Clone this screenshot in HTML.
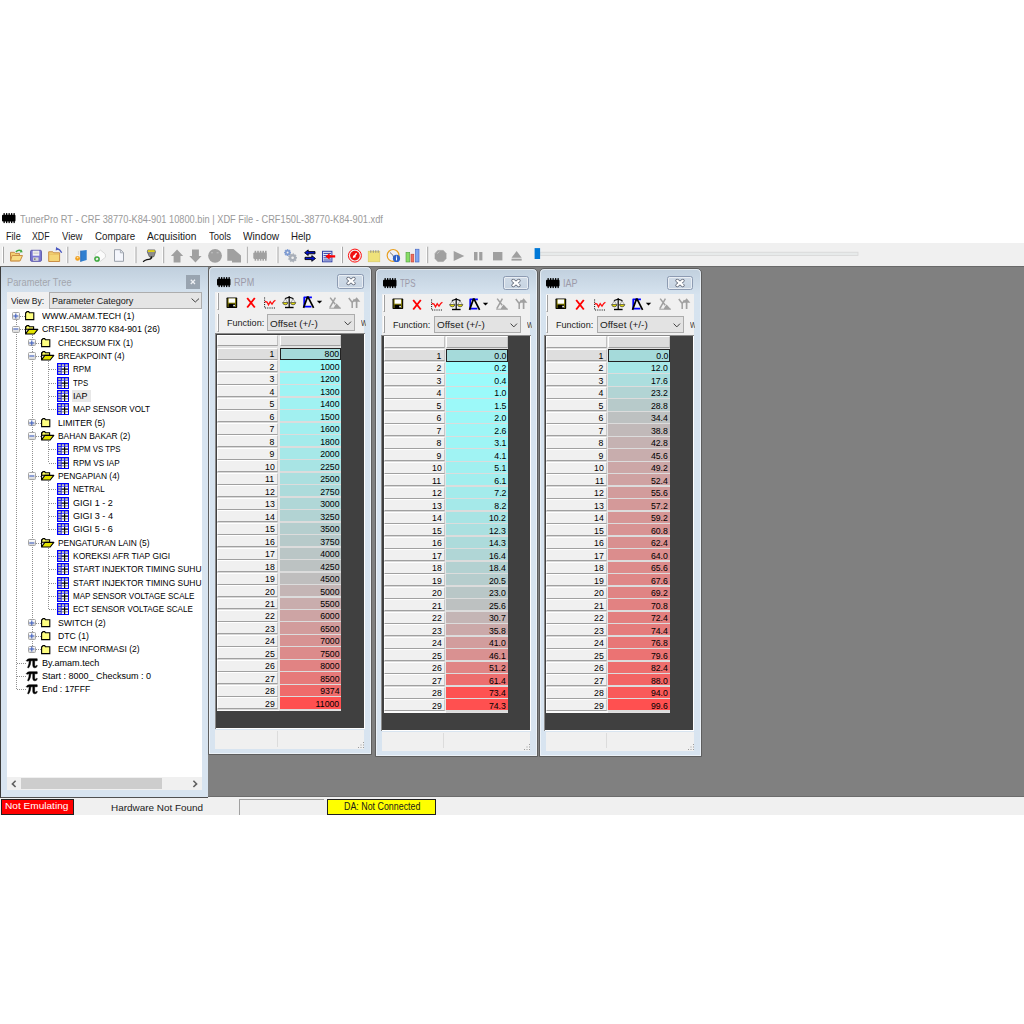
<!DOCTYPE html>
<html><head><meta charset="utf-8"><style>
html,body{margin:0;padding:0;}
body{width:1024px;height:1024px;position:relative;overflow:hidden;background:#fff;font-family:"Liberation Sans", sans-serif;}
div{box-sizing:border-box;}
svg{position:absolute;overflow:visible;}
</style></head><body>
<div style="position:absolute;left:0px;top:243px;width:1024px;height:23px;background:#f0f0f0;"></div>
<div style="position:absolute;left:0px;top:266px;width:1024px;height:531px;background:#808080;border-top:1px solid #696969;"></div>
<div style="position:absolute;left:208px;top:795.6px;width:816px;height:1px;background:#6c6c6c;"></div>
<div style="position:absolute;left:0px;top:796.6px;width:1024px;height:18.4px;background:#f0f0f0;"></div>
<div style="position:absolute;left:0px;top:267px;width:208px;height:530.5px;background:linear-gradient(#c0cfdd 0px,#d3e0ec 24px,#d8e4f0 40px,#d8e4f0 100%);border-left:1px solid #3a3a3a;border-bottom:1.2px solid #505050;"></div>
<div style="position:absolute;left:7px;top:291.5px;width:195px;height:17px;background:#f0f0f0;"></div>
<div style="position:absolute;left:49px;top:292px;width:152.5px;height:16.5px;background:#e5e5e5;border:1px solid #adadad;"></div>
<div style="position:absolute;left:7px;top:308.5px;width:195px;height:468.5px;background:#fff;"></div>
<div style="position:absolute;left:7px;top:777px;width:195px;height:12.5px;background:#f0f0f0;"></div>
<div style="position:absolute;left:21px;top:777.5px;width:141px;height:11.5px;background:#cdcdcd;"></div>
<div style="position:absolute;left:6.80px;top:277.13px;font-size:10.6px;line-height:10.6px;white-space:pre;color:#a3a6ad;font-weight:normal;transform-origin:0 0;transform:scaleX(0.8776);">Parameter Tree</div>
<div style="position:absolute;left:186px;top:275px;width:13.5px;height:13.5px;background:#99a4b0;"></div>
<div style="position:absolute;left:10.90px;top:295.64px;font-size:9.4px;line-height:9.4px;white-space:pre;color:#1a1a1a;font-weight:normal;transform-origin:0 0;transform:scaleX(0.9115);">View By:</div>
<div style="position:absolute;left:52.00px;top:295.67px;font-size:9.6px;line-height:9.6px;white-space:pre;color:#1a1a1a;font-weight:normal;transform-origin:0 0;transform:scaleX(0.9411);">Parameter Category</div>
<div style="position:absolute;left:208px;top:266.4px;width:164px;height:489.1px;background:linear-gradient(#c1d0de 0px,#ccdae7 14px,#d6e3ef 26px,#d8e4f0 100%);border:1px solid #5e5e5e;border-radius:5px 5px 0 0;"></div>
<div style="position:absolute;left:209px;top:267.4px;width:162px;height:487.1px;border:1px solid rgba(255,255,255,0.5);border-radius:4px 4px 0 0;"></div>
<svg style="left:216.6px;top:276.59999999999997px;" width="14" height="10.2" viewBox="0 0 14 10.2"><rect x="0" y="1.8" width="13.5" height="6.6" rx="1" fill="#000"/><rect x="1.50" y="0.1" width="1.3" height="2.2" fill="#000"/><rect x="1.50" y="7.9" width="1.3" height="2.2" fill="#000"/><rect x="4.00" y="0.1" width="1.3" height="2.2" fill="#000"/><rect x="4.00" y="7.9" width="1.3" height="2.2" fill="#000"/><rect x="6.50" y="0.1" width="1.3" height="2.2" fill="#000"/><rect x="6.50" y="7.9" width="1.3" height="2.2" fill="#000"/><rect x="9.00" y="0.1" width="1.3" height="2.2" fill="#000"/><rect x="9.00" y="7.9" width="1.3" height="2.2" fill="#000"/><rect x="11.50" y="0.1" width="1.3" height="2.2" fill="#000"/><rect x="11.50" y="7.9" width="1.3" height="2.2" fill="#000"/></svg>
<div style="position:absolute;left:233.50px;top:276.93px;font-size:10.6px;line-height:10.6px;white-space:pre;color:#9c9aa8;font-weight:normal;transform-origin:0 0;transform:scaleX(0.8579);">RPM</div>
<div style="position:absolute;left:337.4px;top:274.0px;width:26.2px;height:14.5px;border:1px solid #8d9bb2;border-radius:2.5px;background:linear-gradient(#d0dbe7,#c7d4e2);box-shadow:inset 0 0 0 1px rgba(255,255,255,0.55);"></div>
<svg style="left:345.5px;top:277.25px;" width="10" height="8" viewBox="0 0 10 8"><path d="M2.2 1.6 L7.8 6.4 M7.8 1.6 L2.2 6.4" stroke="#5a6170" stroke-width="3.6" stroke-linecap="round"/><path d="M2.2 1.6 L7.8 6.4 M7.8 1.6 L2.2 6.4" stroke="#fff" stroke-width="2.1" stroke-linecap="round"/></svg>
<div style="position:absolute;left:215px;top:292.0px;width:149px;height:41.5px;background:#f0f0f0;"></div>
<div style="position:absolute;left:217px;top:293.2px;width:2px;height:17.3px;border-left:1px solid #fff;border-right:1px solid #a0a0a0;border-bottom:1px solid #a0a0a0;"></div>
<div style="position:absolute;left:217px;top:314.4px;width:2px;height:17.5px;border-left:1px solid #fff;border-right:1px solid #a0a0a0;border-bottom:1px solid #a0a0a0;"></div>
<svg style="left:225.9px;top:296.59999999999997px;" width="11.7" height="11.5" viewBox="0 0 11.7 11.5"><rect x="0.5" y="0.5" width="10.7" height="10.5" rx="0.8" fill="#000"/><rect x="1.6" y="1.4" width="8.5" height="8.7" fill="#807800"/><rect x="2.6" y="1.4" width="6.5" height="4.3" fill="#fff"/><rect x="2.6" y="6.8" width="6.5" height="3.8" fill="#000"/><rect x="7.3" y="7.8" width="1.6" height="1.6" fill="#fff"/></svg>
<svg style="left:245.7px;top:297.09999999999997px;" width="10" height="11.5" viewBox="0 0 10 11.5"><path d="M1.2 1 L8.8 10.5 M8.8 1 L1.2 10.5" stroke="#ff0000" stroke-width="1.9"/></svg>
<svg style="left:264.4px;top:297.0px;" width="12" height="11.5" viewBox="0 0 12 11.5"><path d="M0.6 0.5 V11 H11.5" stroke="#000" stroke-width="1" stroke-dasharray="1 1.2" fill="none"/><path d="M0.8 4.5 L3 5 L4.5 7.8 L6.2 4.8 L8 7.2 L9.8 4.4 L11.4 3.3" stroke="#ff1010" stroke-width="1.3" fill="none"/></svg>
<svg style="left:282.2px;top:296.0px;" width="15" height="12.5" viewBox="0 0 15 12.5"><path d="M7.2 0.3 V11.4" stroke="#000" stroke-width="1.2"/><path d="M3 11.5 H11.6" stroke="#000" stroke-width="1.4"/><path d="M3.2 2.6 L7.2 1.2 L11.2 2.6" stroke="#000" stroke-width="1.1" fill="none"/><path d="M3.3 2.4 V3.4 M11.1 2.4 V3.4" stroke="#000" stroke-width="1"/><path d="M3.3 3 L0.9 6.6 M3.3 3 L5.7 6.6 M11.1 3 L8.7 6.6 M11.1 3 L13.5 6.6" stroke="#777" stroke-width="0.6"/><path d="M0.6 6.6 H6 Q5.6 8.8 3.3 8.8 Q1 8.8 0.6 6.6Z M8.4 6.6 H13.8 Q13.4 8.8 11.1 8.8 Q8.8 8.8 8.4 6.6Z" fill="#f0e800" stroke="#303030" stroke-width="0.7"/></svg>
<svg style="left:303.0px;top:296.0px;" width="20" height="12.5" viewBox="0 0 20 12.5"><path d="M8.9 1.4 H1.2 V10.6 H8.4" stroke="#0000ff" stroke-width="1.7" fill="none" stroke-linejoin="round"/><path d="M4.7 0.4 L0.5 11.9 M4.7 0.4 L10.6 11.9" stroke="#000" stroke-width="1.7"/><path d="M13.8 4.8 H19.2 L16.5 7.6Z" fill="#000"/></svg>
<svg style="left:329.3px;top:296.79999999999995px;" width="12.5" height="11.5" viewBox="0 0 12.5 11.5"><path d="M1.2 0.6 L6.2 7.2 M6.4 0.6 L0.8 10.6" stroke="#a0a0a0" stroke-width="1.5"/><path d="M0.2 11.2 H11.9 L7.6 6.6 L5.8 8.8 L4.6 11.2Z" fill="#a0a0a0"/><path d="M0.2 11.2 H11.9" stroke="#a0a0a0" stroke-width="1"/></svg>
<svg style="left:348.3px;top:296.9px;" width="13" height="11.5" viewBox="0 0 13 11.5"><path d="M0.8 1 L4.2 5.6 L4.2 11 M4.2 5.6 L6.5 2.2" stroke="#a0a0a0" stroke-width="1.5" fill="none"/><path d="M8.6 11 V3.5" stroke="#a0a0a0" stroke-width="1.7"/><path d="M4.9 4.8 L8.6 0.2 L12.4 4.8Z" fill="#a0a0a0"/></svg>
<div style="position:absolute;left:226.60px;top:318.47px;font-size:9.6px;line-height:9.6px;white-space:pre;color:#1a1a1a;font-weight:normal;transform-origin:0 0;transform:scaleX(0.9425);">Function:</div>
<div style="position:absolute;left:267.3px;top:314.2px;width:87.5px;height:17.3px;background:#e3e3e3;border:1px solid #acacac;"></div>
<div style="position:absolute;left:270.40px;top:318.67px;font-size:9.6px;line-height:9.6px;white-space:pre;color:#1a1a1a;font-weight:normal;transform-origin:0 0;transform:scaleX(1.0384);">Offset (+/-)</div>
<svg style="left:343.8px;top:321.0px;" width="8" height="5" viewBox="0 0 8 5"><path d="M0.6 0.6 L3.8 3.9 L7 0.6" stroke="#404040" stroke-width="1" fill="none"/></svg>
<div style="position:absolute;left:361.00px;top:318.47px;font-size:9.6px;line-height:9.6px;white-space:pre;color:#303030;font-weight:normal;transform-origin:0 0;transform:scaleX(0.7172);clip-path:inset(0 2.5px 0 0);">W</div>
<div style="position:absolute;left:215px;top:333px;width:150px;height:396.20000000000005px;background:#fff;border-top:1px solid #8a8a8a;border-left:1px solid #8a8a8a;"></div>
<div style="position:absolute;left:216px;top:334px;width:148px;height:393.70000000000005px;background:#404040;"></div>
<div style="position:absolute;left:215px;top:729.7px;width:149px;height:19.799999999999955px;background:#f0f0f0;"></div>
<div style="position:absolute;left:277px;top:731.2px;width:1px;height:15.799999999999955px;background:#dcdcdc;"></div>
<svg style="left:358px;top:742.0px;" width="6" height="6" viewBox="0 0 6 6"><rect x="5" y="0" width="1" height="1" fill="#9a9a9a"/><rect x="5" y="2.5" width="1" height="1" fill="#9a9a9a"/><rect x="2.5" y="2.5" width="1" height="1" fill="#9a9a9a"/><rect x="5" y="5" width="1" height="1" fill="#9a9a9a"/><rect x="2.5" y="5" width="1" height="1" fill="#9a9a9a"/><rect x="0" y="5" width="1" height="1" fill="#9a9a9a"/></svg>
<div style="position:absolute;left:375px;top:267.9px;width:162.5px;height:489.1px;background:linear-gradient(#c1d0de 0px,#ccdae7 14px,#d6e3ef 26px,#d8e4f0 100%);border:1px solid #5e5e5e;border-radius:5px 5px 0 0;"></div>
<div style="position:absolute;left:376px;top:268.9px;width:160.5px;height:487.1px;border:1px solid rgba(255,255,255,0.5);border-radius:4px 4px 0 0;"></div>
<svg style="left:383.0px;top:278.09999999999997px;" width="14" height="10.2" viewBox="0 0 14 10.2"><rect x="0" y="1.8" width="13.5" height="6.6" rx="1" fill="#000"/><rect x="1.50" y="0.1" width="1.3" height="2.2" fill="#000"/><rect x="1.50" y="7.9" width="1.3" height="2.2" fill="#000"/><rect x="4.00" y="0.1" width="1.3" height="2.2" fill="#000"/><rect x="4.00" y="7.9" width="1.3" height="2.2" fill="#000"/><rect x="6.50" y="0.1" width="1.3" height="2.2" fill="#000"/><rect x="6.50" y="7.9" width="1.3" height="2.2" fill="#000"/><rect x="9.00" y="0.1" width="1.3" height="2.2" fill="#000"/><rect x="9.00" y="7.9" width="1.3" height="2.2" fill="#000"/><rect x="11.50" y="0.1" width="1.3" height="2.2" fill="#000"/><rect x="11.50" y="7.9" width="1.3" height="2.2" fill="#000"/></svg>
<div style="position:absolute;left:399.90px;top:278.43px;font-size:10.6px;line-height:10.6px;white-space:pre;color:#9c9aa8;font-weight:normal;transform-origin:0 0;transform:scaleX(0.7521);">TPS</div>
<div style="position:absolute;left:502.9px;top:275.5px;width:26.2px;height:14.5px;border:1px solid #8d9bb2;border-radius:2.5px;background:linear-gradient(#d0dbe7,#c7d4e2);box-shadow:inset 0 0 0 1px rgba(255,255,255,0.55);"></div>
<svg style="left:511.0px;top:278.75px;" width="10" height="8" viewBox="0 0 10 8"><path d="M2.2 1.6 L7.8 6.4 M7.8 1.6 L2.2 6.4" stroke="#5a6170" stroke-width="3.6" stroke-linecap="round"/><path d="M2.2 1.6 L7.8 6.4 M7.8 1.6 L2.2 6.4" stroke="#fff" stroke-width="2.1" stroke-linecap="round"/></svg>
<div style="position:absolute;left:382px;top:293.5px;width:147.5px;height:41.5px;background:#f0f0f0;"></div>
<div style="position:absolute;left:383.4px;top:294.7px;width:2px;height:17.3px;border-left:1px solid #fff;border-right:1px solid #a0a0a0;border-bottom:1px solid #a0a0a0;"></div>
<div style="position:absolute;left:383.4px;top:315.9px;width:2px;height:17.5px;border-left:1px solid #fff;border-right:1px solid #a0a0a0;border-bottom:1px solid #a0a0a0;"></div>
<svg style="left:392.29999999999995px;top:298.09999999999997px;" width="11.7" height="11.5" viewBox="0 0 11.7 11.5"><rect x="0.5" y="0.5" width="10.7" height="10.5" rx="0.8" fill="#000"/><rect x="1.6" y="1.4" width="8.5" height="8.7" fill="#807800"/><rect x="2.6" y="1.4" width="6.5" height="4.3" fill="#fff"/><rect x="2.6" y="6.8" width="6.5" height="3.8" fill="#000"/><rect x="7.3" y="7.8" width="1.6" height="1.6" fill="#fff"/></svg>
<svg style="left:412.09999999999997px;top:298.59999999999997px;" width="10" height="11.5" viewBox="0 0 10 11.5"><path d="M1.2 1 L8.8 10.5 M8.8 1 L1.2 10.5" stroke="#ff0000" stroke-width="1.9"/></svg>
<svg style="left:430.79999999999995px;top:298.5px;" width="12" height="11.5" viewBox="0 0 12 11.5"><path d="M0.6 0.5 V11 H11.5" stroke="#000" stroke-width="1" stroke-dasharray="1 1.2" fill="none"/><path d="M0.8 4.5 L3 5 L4.5 7.8 L6.2 4.8 L8 7.2 L9.8 4.4 L11.4 3.3" stroke="#ff1010" stroke-width="1.3" fill="none"/></svg>
<svg style="left:448.59999999999997px;top:297.5px;" width="15" height="12.5" viewBox="0 0 15 12.5"><path d="M7.2 0.3 V11.4" stroke="#000" stroke-width="1.2"/><path d="M3 11.5 H11.6" stroke="#000" stroke-width="1.4"/><path d="M3.2 2.6 L7.2 1.2 L11.2 2.6" stroke="#000" stroke-width="1.1" fill="none"/><path d="M3.3 2.4 V3.4 M11.1 2.4 V3.4" stroke="#000" stroke-width="1"/><path d="M3.3 3 L0.9 6.6 M3.3 3 L5.7 6.6 M11.1 3 L8.7 6.6 M11.1 3 L13.5 6.6" stroke="#777" stroke-width="0.6"/><path d="M0.6 6.6 H6 Q5.6 8.8 3.3 8.8 Q1 8.8 0.6 6.6Z M8.4 6.6 H13.8 Q13.4 8.8 11.1 8.8 Q8.8 8.8 8.4 6.6Z" fill="#f0e800" stroke="#303030" stroke-width="0.7"/></svg>
<svg style="left:469.4px;top:297.5px;" width="20" height="12.5" viewBox="0 0 20 12.5"><path d="M8.9 1.4 H1.2 V10.6 H8.4" stroke="#0000ff" stroke-width="1.7" fill="none" stroke-linejoin="round"/><path d="M4.7 0.4 L0.5 11.9 M4.7 0.4 L10.6 11.9" stroke="#000" stroke-width="1.7"/><path d="M13.8 4.8 H19.2 L16.5 7.6Z" fill="#000"/></svg>
<svg style="left:495.7px;top:298.29999999999995px;" width="12.5" height="11.5" viewBox="0 0 12.5 11.5"><path d="M1.2 0.6 L6.2 7.2 M6.4 0.6 L0.8 10.6" stroke="#a0a0a0" stroke-width="1.5"/><path d="M0.2 11.2 H11.9 L7.6 6.6 L5.8 8.8 L4.6 11.2Z" fill="#a0a0a0"/><path d="M0.2 11.2 H11.9" stroke="#a0a0a0" stroke-width="1"/></svg>
<svg style="left:514.7px;top:298.4px;" width="13" height="11.5" viewBox="0 0 13 11.5"><path d="M0.8 1 L4.2 5.6 L4.2 11 M4.2 5.6 L6.5 2.2" stroke="#a0a0a0" stroke-width="1.5" fill="none"/><path d="M8.6 11 V3.5" stroke="#a0a0a0" stroke-width="1.7"/><path d="M4.9 4.8 L8.6 0.2 L12.4 4.8Z" fill="#a0a0a0"/></svg>
<div style="position:absolute;left:393.00px;top:319.97px;font-size:9.6px;line-height:9.6px;white-space:pre;color:#1a1a1a;font-weight:normal;transform-origin:0 0;transform:scaleX(0.9425);">Function:</div>
<div style="position:absolute;left:433.7px;top:315.7px;width:87.5px;height:17.3px;background:#e3e3e3;border:1px solid #acacac;"></div>
<div style="position:absolute;left:436.80px;top:320.17px;font-size:9.6px;line-height:9.6px;white-space:pre;color:#1a1a1a;font-weight:normal;transform-origin:0 0;transform:scaleX(1.0384);">Offset (+/-)</div>
<svg style="left:510.2px;top:322.5px;" width="8" height="5" viewBox="0 0 8 5"><path d="M0.6 0.6 L3.8 3.9 L7 0.6" stroke="#404040" stroke-width="1" fill="none"/></svg>
<div style="position:absolute;left:527.40px;top:319.97px;font-size:9.6px;line-height:9.6px;white-space:pre;color:#303030;font-weight:normal;transform-origin:0 0;transform:scaleX(0.7172);clip-path:inset(0 2.5px 0 0);">W</div>
<div style="position:absolute;left:381.4px;top:334.5px;width:149.89999999999998px;height:396.79999999999995px;background:#fff;border-top:1px solid #8a8a8a;border-left:1px solid #8a8a8a;"></div>
<div style="position:absolute;left:382.4px;top:335.5px;width:147.89999999999998px;height:394.29999999999995px;background:#404040;"></div>
<div style="position:absolute;left:382px;top:731.8px;width:147.5px;height:19.200000000000045px;background:#f0f0f0;"></div>
<div style="position:absolute;left:443.4px;top:733.3px;width:1px;height:15.200000000000045px;background:#dcdcdc;"></div>
<svg style="left:523.5px;top:743.5px;" width="6" height="6" viewBox="0 0 6 6"><rect x="5" y="0" width="1" height="1" fill="#9a9a9a"/><rect x="5" y="2.5" width="1" height="1" fill="#9a9a9a"/><rect x="2.5" y="2.5" width="1" height="1" fill="#9a9a9a"/><rect x="5" y="5" width="1" height="1" fill="#9a9a9a"/><rect x="2.5" y="5" width="1" height="1" fill="#9a9a9a"/><rect x="0" y="5" width="1" height="1" fill="#9a9a9a"/></svg>
<div style="position:absolute;left:538.5px;top:267.9px;width:163.0px;height:489.1px;background:linear-gradient(#c1d0de 0px,#ccdae7 14px,#d6e3ef 26px,#d8e4f0 100%);border:1px solid #5e5e5e;border-radius:5px 5px 0 0;"></div>
<div style="position:absolute;left:539.5px;top:268.9px;width:161.0px;height:487.1px;border:1px solid rgba(255,255,255,0.5);border-radius:4px 4px 0 0;"></div>
<svg style="left:545.8000000000001px;top:278.09999999999997px;" width="14" height="10.2" viewBox="0 0 14 10.2"><rect x="0" y="1.8" width="13.5" height="6.6" rx="1" fill="#000"/><rect x="1.50" y="0.1" width="1.3" height="2.2" fill="#000"/><rect x="1.50" y="7.9" width="1.3" height="2.2" fill="#000"/><rect x="4.00" y="0.1" width="1.3" height="2.2" fill="#000"/><rect x="4.00" y="7.9" width="1.3" height="2.2" fill="#000"/><rect x="6.50" y="0.1" width="1.3" height="2.2" fill="#000"/><rect x="6.50" y="7.9" width="1.3" height="2.2" fill="#000"/><rect x="9.00" y="0.1" width="1.3" height="2.2" fill="#000"/><rect x="9.00" y="7.9" width="1.3" height="2.2" fill="#000"/><rect x="11.50" y="0.1" width="1.3" height="2.2" fill="#000"/><rect x="11.50" y="7.9" width="1.3" height="2.2" fill="#000"/></svg>
<div style="position:absolute;left:562.70px;top:278.43px;font-size:10.6px;line-height:10.6px;white-space:pre;color:#9c9aa8;font-weight:normal;transform-origin:0 0;transform:scaleX(0.8490);">IAP</div>
<div style="position:absolute;left:666.9px;top:275.5px;width:26.2px;height:14.5px;border:1px solid #8d9bb2;border-radius:2.5px;background:linear-gradient(#d0dbe7,#c7d4e2);box-shadow:inset 0 0 0 1px rgba(255,255,255,0.55);"></div>
<svg style="left:675.0px;top:278.75px;" width="10" height="8" viewBox="0 0 10 8"><path d="M2.2 1.6 L7.8 6.4 M7.8 1.6 L2.2 6.4" stroke="#5a6170" stroke-width="3.6" stroke-linecap="round"/><path d="M2.2 1.6 L7.8 6.4 M7.8 1.6 L2.2 6.4" stroke="#fff" stroke-width="2.1" stroke-linecap="round"/></svg>
<div style="position:absolute;left:545.5px;top:293.5px;width:148.0px;height:41.5px;background:#f0f0f0;"></div>
<div style="position:absolute;left:546.2px;top:294.7px;width:2px;height:17.3px;border-left:1px solid #fff;border-right:1px solid #a0a0a0;border-bottom:1px solid #a0a0a0;"></div>
<div style="position:absolute;left:546.2px;top:315.9px;width:2px;height:17.5px;border-left:1px solid #fff;border-right:1px solid #a0a0a0;border-bottom:1px solid #a0a0a0;"></div>
<svg style="left:555.1px;top:298.09999999999997px;" width="11.7" height="11.5" viewBox="0 0 11.7 11.5"><rect x="0.5" y="0.5" width="10.7" height="10.5" rx="0.8" fill="#000"/><rect x="1.6" y="1.4" width="8.5" height="8.7" fill="#807800"/><rect x="2.6" y="1.4" width="6.5" height="4.3" fill="#fff"/><rect x="2.6" y="6.8" width="6.5" height="3.8" fill="#000"/><rect x="7.3" y="7.8" width="1.6" height="1.6" fill="#fff"/></svg>
<svg style="left:574.9000000000001px;top:298.59999999999997px;" width="10" height="11.5" viewBox="0 0 10 11.5"><path d="M1.2 1 L8.8 10.5 M8.8 1 L1.2 10.5" stroke="#ff0000" stroke-width="1.9"/></svg>
<svg style="left:593.6px;top:298.5px;" width="12" height="11.5" viewBox="0 0 12 11.5"><path d="M0.6 0.5 V11 H11.5" stroke="#000" stroke-width="1" stroke-dasharray="1 1.2" fill="none"/><path d="M0.8 4.5 L3 5 L4.5 7.8 L6.2 4.8 L8 7.2 L9.8 4.4 L11.4 3.3" stroke="#ff1010" stroke-width="1.3" fill="none"/></svg>
<svg style="left:611.4000000000001px;top:297.5px;" width="15" height="12.5" viewBox="0 0 15 12.5"><path d="M7.2 0.3 V11.4" stroke="#000" stroke-width="1.2"/><path d="M3 11.5 H11.6" stroke="#000" stroke-width="1.4"/><path d="M3.2 2.6 L7.2 1.2 L11.2 2.6" stroke="#000" stroke-width="1.1" fill="none"/><path d="M3.3 2.4 V3.4 M11.1 2.4 V3.4" stroke="#000" stroke-width="1"/><path d="M3.3 3 L0.9 6.6 M3.3 3 L5.7 6.6 M11.1 3 L8.7 6.6 M11.1 3 L13.5 6.6" stroke="#777" stroke-width="0.6"/><path d="M0.6 6.6 H6 Q5.6 8.8 3.3 8.8 Q1 8.8 0.6 6.6Z M8.4 6.6 H13.8 Q13.4 8.8 11.1 8.8 Q8.8 8.8 8.4 6.6Z" fill="#f0e800" stroke="#303030" stroke-width="0.7"/></svg>
<svg style="left:632.2px;top:297.5px;" width="20" height="12.5" viewBox="0 0 20 12.5"><path d="M8.9 1.4 H1.2 V10.6 H8.4" stroke="#0000ff" stroke-width="1.7" fill="none" stroke-linejoin="round"/><path d="M4.7 0.4 L0.5 11.9 M4.7 0.4 L10.6 11.9" stroke="#000" stroke-width="1.7"/><path d="M13.8 4.8 H19.2 L16.5 7.6Z" fill="#000"/></svg>
<svg style="left:658.5px;top:298.29999999999995px;" width="12.5" height="11.5" viewBox="0 0 12.5 11.5"><path d="M1.2 0.6 L6.2 7.2 M6.4 0.6 L0.8 10.6" stroke="#a0a0a0" stroke-width="1.5"/><path d="M0.2 11.2 H11.9 L7.6 6.6 L5.8 8.8 L4.6 11.2Z" fill="#a0a0a0"/><path d="M0.2 11.2 H11.9" stroke="#a0a0a0" stroke-width="1"/></svg>
<svg style="left:677.5px;top:298.4px;" width="13" height="11.5" viewBox="0 0 13 11.5"><path d="M0.8 1 L4.2 5.6 L4.2 11 M4.2 5.6 L6.5 2.2" stroke="#a0a0a0" stroke-width="1.5" fill="none"/><path d="M8.6 11 V3.5" stroke="#a0a0a0" stroke-width="1.7"/><path d="M4.9 4.8 L8.6 0.2 L12.4 4.8Z" fill="#a0a0a0"/></svg>
<div style="position:absolute;left:555.80px;top:319.97px;font-size:9.6px;line-height:9.6px;white-space:pre;color:#1a1a1a;font-weight:normal;transform-origin:0 0;transform:scaleX(0.9425);">Function:</div>
<div style="position:absolute;left:596.5px;top:315.7px;width:87.5px;height:17.3px;background:#e3e3e3;border:1px solid #acacac;"></div>
<div style="position:absolute;left:599.60px;top:320.17px;font-size:9.6px;line-height:9.6px;white-space:pre;color:#1a1a1a;font-weight:normal;transform-origin:0 0;transform:scaleX(1.0384);">Offset (+/-)</div>
<svg style="left:673.0px;top:322.5px;" width="8" height="5" viewBox="0 0 8 5"><path d="M0.6 0.6 L3.8 3.9 L7 0.6" stroke="#404040" stroke-width="1" fill="none"/></svg>
<div style="position:absolute;left:690.20px;top:319.97px;font-size:9.6px;line-height:9.6px;white-space:pre;color:#303030;font-weight:normal;transform-origin:0 0;transform:scaleX(0.7172);clip-path:inset(0 2.5px 0 0);">W</div>
<div style="position:absolute;left:543.8px;top:334.5px;width:150.0px;height:396.79999999999995px;background:#fff;border-top:1px solid #8a8a8a;border-left:1px solid #8a8a8a;"></div>
<div style="position:absolute;left:544.8px;top:335.5px;width:148.0px;height:394.29999999999995px;background:#404040;"></div>
<div style="position:absolute;left:545.5px;top:731.8px;width:148.0px;height:19.200000000000045px;background:#f0f0f0;"></div>
<div style="position:absolute;left:605.8px;top:733.3px;width:1px;height:15.200000000000045px;background:#dcdcdc;"></div>
<svg style="left:687.5px;top:743.5px;" width="6" height="6" viewBox="0 0 6 6"><rect x="5" y="0" width="1" height="1" fill="#9a9a9a"/><rect x="5" y="2.5" width="1" height="1" fill="#9a9a9a"/><rect x="2.5" y="2.5" width="1" height="1" fill="#9a9a9a"/><rect x="5" y="5" width="1" height="1" fill="#9a9a9a"/><rect x="2.5" y="5" width="1" height="1" fill="#9a9a9a"/><rect x="0" y="5" width="1" height="1" fill="#9a9a9a"/></svg>
<div style="position:absolute;left:1px;top:799px;width:73px;height:16px;background:#ff0000;border:1px solid #202020;"></div>
<div style="position:absolute;left:239px;top:799px;width:85px;height:16px;border-left:1px solid #a0a0a0;border-top:1px solid #a0a0a0;"></div>
<div style="position:absolute;left:327px;top:799px;width:109px;height:16px;background:#ffff00;border:1px solid #202020;"></div>
<div style="position:absolute;left:16px;top:320.0px;width:1px;height:369.8799999999999px;background:repeating-linear-gradient(#909090 0 1px, transparent 1px 2px);"></div>
<div style="position:absolute;left:32px;top:333.335px;width:1px;height:316.54px;background:repeating-linear-gradient(#909090 0 1px, transparent 1px 2px);"></div>
<div style="position:absolute;left:48px;top:361.005px;width:1px;height:48.839999999999975px;background:repeating-linear-gradient(#909090 0 1px, transparent 1px 2px);"></div>
<div style="position:absolute;left:48px;top:441.01500000000004px;width:1px;height:22.16999999999996px;background:repeating-linear-gradient(#909090 0 1px, transparent 1px 2px);"></div>
<div style="position:absolute;left:48px;top:481.02000000000004px;width:1px;height:48.83999999999986px;background:repeating-linear-gradient(#909090 0 1px, transparent 1px 2px);"></div>
<div style="position:absolute;left:48px;top:547.6949999999999px;width:1px;height:62.174999999999955px;background:repeating-linear-gradient(#909090 0 1px, transparent 1px 2px);"></div>
<div style="position:absolute;left:20px;top:316px;width:5px;height:1px;background:repeating-linear-gradient(90deg,#909090 0 1px, transparent 1px 2px);"></div>
<div style="position:absolute;left:12.1px;top:312.3px;width:7.8px;height:7.4px;border:1px solid #a4a4a4;border-radius:1.5px;background:linear-gradient(#ffffff,#d8d8d8);"></div>
<svg style="left:12.2px;top:312.0px;" width="8" height="8" viewBox="0 0 8 8"><path d="M1.3 4 H6.3" stroke="#3f5fbf" stroke-width="1.1"/><path d="M3.8 1.5 V6.5" stroke="#3f5fbf" stroke-width="1.1"/></svg>
<svg style="left:25px;top:311.4px;" width="10" height="9.5" viewBox="0 0 10 9.5"><path d="M0.6 1.8 H1.2 L1.9 0.6 H3.7 L4.4 1.8 H8.8 V8.6 H0.6Z" fill="#ffff80" stroke="#000" stroke-width="1.1"/></svg>
<div style="position:absolute;left:42.30px;top:311.07px;font-size:9.6px;line-height:9.6px;white-space:pre;color:#000;font-weight:normal;transform-origin:0 0;transform:scaleX(0.9115);">WWW.AMAM.TECH (1)</div>
<div style="position:absolute;left:20px;top:329px;width:5px;height:1px;background:repeating-linear-gradient(90deg,#909090 0 1px, transparent 1px 2px);"></div>
<div style="position:absolute;left:12.1px;top:325.635px;width:7.8px;height:7.4px;border:1px solid #a4a4a4;border-radius:1.5px;background:linear-gradient(#ffffff,#d8d8d8);"></div>
<svg style="left:12.2px;top:325.335px;" width="8" height="8" viewBox="0 0 8 8"><path d="M1.3 4 H6.3" stroke="#3f5fbf" stroke-width="1.1"/></svg>
<svg style="left:25px;top:324.53499999999997px;" width="13.5" height="10" viewBox="0 0 13.5 10"><path d="M0.6 1.8 H1.2 L1.9 0.6 H3.7 L4.4 1.8 H8.6 V4.2 H0.6Z" fill="#ffff60" stroke="#000" stroke-width="1.1"/><path d="M0.6 1.8 V9 H9.2 L12.8 4.4 H3.8 L0.6 9" fill="#e4e400" stroke="#000" stroke-width="1.1" stroke-linejoin="round"/></svg>
<div style="position:absolute;left:42.30px;top:324.41px;font-size:9.6px;line-height:9.6px;white-space:pre;color:#000;font-weight:normal;transform-origin:0 0;transform:scaleX(0.9167);">CRF150L 38770 K84-901 (26)</div>
<div style="position:absolute;left:36px;top:343px;width:5px;height:1px;background:repeating-linear-gradient(90deg,#909090 0 1px, transparent 1px 2px);"></div>
<div style="position:absolute;left:28.1px;top:338.97px;width:7.8px;height:7.4px;border:1px solid #a4a4a4;border-radius:1.5px;background:linear-gradient(#ffffff,#d8d8d8);"></div>
<svg style="left:28.2px;top:338.67px;" width="8" height="8" viewBox="0 0 8 8"><path d="M1.3 4 H6.3" stroke="#3f5fbf" stroke-width="1.1"/><path d="M3.8 1.5 V6.5" stroke="#3f5fbf" stroke-width="1.1"/></svg>
<svg style="left:41px;top:338.07px;" width="10" height="9.5" viewBox="0 0 10 9.5"><path d="M0.6 1.8 H1.2 L1.9 0.6 H3.7 L4.4 1.8 H8.8 V8.6 H0.6Z" fill="#ffff80" stroke="#000" stroke-width="1.1"/></svg>
<div style="position:absolute;left:57.90px;top:337.74px;font-size:9.6px;line-height:9.6px;white-space:pre;color:#000;font-weight:normal;transform-origin:0 0;transform:scaleX(0.8643);">CHECKSUM FIX (1)</div>
<div style="position:absolute;left:36px;top:356px;width:5px;height:1px;background:repeating-linear-gradient(90deg,#909090 0 1px, transparent 1px 2px);"></div>
<div style="position:absolute;left:28.1px;top:352.305px;width:7.8px;height:7.4px;border:1px solid #a4a4a4;border-radius:1.5px;background:linear-gradient(#ffffff,#d8d8d8);"></div>
<svg style="left:28.2px;top:352.005px;" width="8" height="8" viewBox="0 0 8 8"><path d="M1.3 4 H6.3" stroke="#3f5fbf" stroke-width="1.1"/></svg>
<svg style="left:41px;top:351.205px;" width="13.5" height="10" viewBox="0 0 13.5 10"><path d="M0.6 1.8 H1.2 L1.9 0.6 H3.7 L4.4 1.8 H8.6 V4.2 H0.6Z" fill="#ffff60" stroke="#000" stroke-width="1.1"/><path d="M0.6 1.8 V9 H9.2 L12.8 4.4 H3.8 L0.6 9" fill="#e4e400" stroke="#000" stroke-width="1.1" stroke-linejoin="round"/></svg>
<div style="position:absolute;left:57.90px;top:351.08px;font-size:9.6px;line-height:9.6px;white-space:pre;color:#000;font-weight:normal;transform-origin:0 0;transform:scaleX(0.8743);">BREAKPOINT (4)</div>
<div style="position:absolute;left:49px;top:369px;width:8px;height:1px;background:repeating-linear-gradient(90deg,#909090 0 1px, transparent 1px 2px);"></div>
<svg style="left:57.3px;top:363.44px;" width="12" height="12" viewBox="0 0 12 12"><rect x="0" y="0" width="12" height="12" fill="#0000ff"/><rect x="1.2" y="1.2" width="2.6" height="1.8" fill="#c8c8b0"/><rect x="4.8" y="1.2" width="2.3" height="1.8" fill="#c8c8b0"/><rect x="8.2" y="1.2" width="2.6" height="1.8" fill="#c8c8b0"/><rect x="1.2" y="3.8" width="2.6" height="1.8" fill="#c8c8b0"/><rect x="1.2" y="6.4" width="2.6" height="1.8" fill="#c8c8b0"/><rect x="1.2" y="9.0" width="2.6" height="1.8" fill="#c8c8b0"/><rect x="4.6" y="3.6" width="6.4" height="7.4" fill="#fff"/><path d="M7.6 3.4 V11 M4.4 6.2 H11" stroke="#000" stroke-width="1.2"/><path d="M4.4 8.8 H11" stroke="#444" stroke-width="0.7"/></svg>
<div style="position:absolute;left:73.40px;top:364.41px;font-size:9.6px;line-height:9.6px;white-space:pre;color:#000;font-weight:normal;transform-origin:0 0;transform:scaleX(0.8393);">RPM</div>
<div style="position:absolute;left:49px;top:383px;width:8px;height:1px;background:repeating-linear-gradient(90deg,#909090 0 1px, transparent 1px 2px);"></div>
<svg style="left:57.3px;top:376.77500000000003px;" width="12" height="12" viewBox="0 0 12 12"><rect x="0" y="0" width="12" height="12" fill="#0000ff"/><rect x="1.2" y="1.2" width="2.6" height="1.8" fill="#c8c8b0"/><rect x="4.8" y="1.2" width="2.3" height="1.8" fill="#c8c8b0"/><rect x="8.2" y="1.2" width="2.6" height="1.8" fill="#c8c8b0"/><rect x="1.2" y="3.8" width="2.6" height="1.8" fill="#c8c8b0"/><rect x="1.2" y="6.4" width="2.6" height="1.8" fill="#c8c8b0"/><rect x="1.2" y="9.0" width="2.6" height="1.8" fill="#c8c8b0"/><rect x="4.6" y="3.6" width="6.4" height="7.4" fill="#fff"/><path d="M7.6 3.4 V11 M4.4 6.2 H11" stroke="#000" stroke-width="1.2"/><path d="M4.4 8.8 H11" stroke="#444" stroke-width="0.7"/></svg>
<div style="position:absolute;left:73.40px;top:377.75px;font-size:9.6px;line-height:9.6px;white-space:pre;color:#000;font-weight:normal;transform-origin:0 0;transform:scaleX(0.8141);">TPS</div>
<div style="position:absolute;left:49px;top:396px;width:8px;height:1px;background:repeating-linear-gradient(90deg,#909090 0 1px, transparent 1px 2px);"></div>
<div style="position:absolute;left:71.5px;top:389.81px;width:19px;height:12.6px;background:#e8e8e8;"></div>
<svg style="left:57.3px;top:390.11px;" width="12" height="12" viewBox="0 0 12 12"><rect x="0" y="0" width="12" height="12" fill="#0000ff"/><rect x="1.2" y="1.2" width="2.6" height="1.8" fill="#c8c8b0"/><rect x="4.8" y="1.2" width="2.3" height="1.8" fill="#c8c8b0"/><rect x="8.2" y="1.2" width="2.6" height="1.8" fill="#c8c8b0"/><rect x="1.2" y="3.8" width="2.6" height="1.8" fill="#c8c8b0"/><rect x="1.2" y="6.4" width="2.6" height="1.8" fill="#c8c8b0"/><rect x="1.2" y="9.0" width="2.6" height="1.8" fill="#c8c8b0"/><rect x="4.6" y="3.6" width="6.4" height="7.4" fill="#fff"/><path d="M7.6 3.4 V11 M4.4 6.2 H11" stroke="#000" stroke-width="1.2"/><path d="M4.4 8.8 H11" stroke="#444" stroke-width="0.7"/></svg>
<div style="position:absolute;left:73.40px;top:391.08px;font-size:9.6px;line-height:9.6px;white-space:pre;color:#000;font-weight:normal;transform-origin:0 0;transform:scaleX(0.9309);">IAP</div>
<div style="position:absolute;left:49px;top:409px;width:8px;height:1px;background:repeating-linear-gradient(90deg,#909090 0 1px, transparent 1px 2px);"></div>
<svg style="left:57.3px;top:403.445px;" width="12" height="12" viewBox="0 0 12 12"><rect x="0" y="0" width="12" height="12" fill="#0000ff"/><rect x="1.2" y="1.2" width="2.6" height="1.8" fill="#c8c8b0"/><rect x="4.8" y="1.2" width="2.3" height="1.8" fill="#c8c8b0"/><rect x="8.2" y="1.2" width="2.6" height="1.8" fill="#c8c8b0"/><rect x="1.2" y="3.8" width="2.6" height="1.8" fill="#c8c8b0"/><rect x="1.2" y="6.4" width="2.6" height="1.8" fill="#c8c8b0"/><rect x="1.2" y="9.0" width="2.6" height="1.8" fill="#c8c8b0"/><rect x="4.6" y="3.6" width="6.4" height="7.4" fill="#fff"/><path d="M7.6 3.4 V11 M4.4 6.2 H11" stroke="#000" stroke-width="1.2"/><path d="M4.4 8.8 H11" stroke="#444" stroke-width="0.7"/></svg>
<div style="position:absolute;left:73.40px;top:404.42px;font-size:9.6px;line-height:9.6px;white-space:pre;color:#000;font-weight:normal;transform-origin:0 0;transform:scaleX(0.8468);">MAP SENSOR VOLT</div>
<div style="position:absolute;left:36px;top:423px;width:5px;height:1px;background:repeating-linear-gradient(90deg,#909090 0 1px, transparent 1px 2px);"></div>
<div style="position:absolute;left:28.1px;top:418.98px;width:7.8px;height:7.4px;border:1px solid #a4a4a4;border-radius:1.5px;background:linear-gradient(#ffffff,#d8d8d8);"></div>
<svg style="left:28.2px;top:418.68px;" width="8" height="8" viewBox="0 0 8 8"><path d="M1.3 4 H6.3" stroke="#3f5fbf" stroke-width="1.1"/><path d="M3.8 1.5 V6.5" stroke="#3f5fbf" stroke-width="1.1"/></svg>
<svg style="left:41px;top:418.08px;" width="10" height="9.5" viewBox="0 0 10 9.5"><path d="M0.6 1.8 H1.2 L1.9 0.6 H3.7 L4.4 1.8 H8.8 V8.6 H0.6Z" fill="#ffff80" stroke="#000" stroke-width="1.1"/></svg>
<div style="position:absolute;left:57.90px;top:417.75px;font-size:9.6px;line-height:9.6px;white-space:pre;color:#000;font-weight:normal;transform-origin:0 0;transform:scaleX(0.9033);">LIMITER (5)</div>
<div style="position:absolute;left:36px;top:436px;width:5px;height:1px;background:repeating-linear-gradient(90deg,#909090 0 1px, transparent 1px 2px);"></div>
<div style="position:absolute;left:28.1px;top:432.31500000000005px;width:7.8px;height:7.4px;border:1px solid #a4a4a4;border-radius:1.5px;background:linear-gradient(#ffffff,#d8d8d8);"></div>
<svg style="left:28.2px;top:432.01500000000004px;" width="8" height="8" viewBox="0 0 8 8"><path d="M1.3 4 H6.3" stroke="#3f5fbf" stroke-width="1.1"/></svg>
<svg style="left:41px;top:431.21500000000003px;" width="13.5" height="10" viewBox="0 0 13.5 10"><path d="M0.6 1.8 H1.2 L1.9 0.6 H3.7 L4.4 1.8 H8.6 V4.2 H0.6Z" fill="#ffff60" stroke="#000" stroke-width="1.1"/><path d="M0.6 1.8 V9 H9.2 L12.8 4.4 H3.8 L0.6 9" fill="#e4e400" stroke="#000" stroke-width="1.1" stroke-linejoin="round"/></svg>
<div style="position:absolute;left:57.90px;top:431.09px;font-size:9.6px;line-height:9.6px;white-space:pre;color:#000;font-weight:normal;transform-origin:0 0;transform:scaleX(0.8737);">BAHAN BAKAR (2)</div>
<div style="position:absolute;left:49px;top:449px;width:8px;height:1px;background:repeating-linear-gradient(90deg,#909090 0 1px, transparent 1px 2px);"></div>
<svg style="left:57.3px;top:443.45000000000005px;" width="12" height="12" viewBox="0 0 12 12"><rect x="0" y="0" width="12" height="12" fill="#0000ff"/><rect x="1.2" y="1.2" width="2.6" height="1.8" fill="#c8c8b0"/><rect x="4.8" y="1.2" width="2.3" height="1.8" fill="#c8c8b0"/><rect x="8.2" y="1.2" width="2.6" height="1.8" fill="#c8c8b0"/><rect x="1.2" y="3.8" width="2.6" height="1.8" fill="#c8c8b0"/><rect x="1.2" y="6.4" width="2.6" height="1.8" fill="#c8c8b0"/><rect x="1.2" y="9.0" width="2.6" height="1.8" fill="#c8c8b0"/><rect x="4.6" y="3.6" width="6.4" height="7.4" fill="#fff"/><path d="M7.6 3.4 V11 M4.4 6.2 H11" stroke="#000" stroke-width="1.2"/><path d="M4.4 8.8 H11" stroke="#444" stroke-width="0.7"/></svg>
<div style="position:absolute;left:73.40px;top:444.42px;font-size:9.6px;line-height:9.6px;white-space:pre;color:#000;font-weight:normal;transform-origin:0 0;transform:scaleX(0.8216);">RPM VS TPS</div>
<div style="position:absolute;left:49px;top:463px;width:8px;height:1px;background:repeating-linear-gradient(90deg,#909090 0 1px, transparent 1px 2px);"></div>
<svg style="left:57.3px;top:456.785px;" width="12" height="12" viewBox="0 0 12 12"><rect x="0" y="0" width="12" height="12" fill="#0000ff"/><rect x="1.2" y="1.2" width="2.6" height="1.8" fill="#c8c8b0"/><rect x="4.8" y="1.2" width="2.3" height="1.8" fill="#c8c8b0"/><rect x="8.2" y="1.2" width="2.6" height="1.8" fill="#c8c8b0"/><rect x="1.2" y="3.8" width="2.6" height="1.8" fill="#c8c8b0"/><rect x="1.2" y="6.4" width="2.6" height="1.8" fill="#c8c8b0"/><rect x="1.2" y="9.0" width="2.6" height="1.8" fill="#c8c8b0"/><rect x="4.6" y="3.6" width="6.4" height="7.4" fill="#fff"/><path d="M7.6 3.4 V11 M4.4 6.2 H11" stroke="#000" stroke-width="1.2"/><path d="M4.4 8.8 H11" stroke="#444" stroke-width="0.7"/></svg>
<div style="position:absolute;left:73.40px;top:457.76px;font-size:9.6px;line-height:9.6px;white-space:pre;color:#000;font-weight:normal;transform-origin:0 0;transform:scaleX(0.8485);">RPM VS IAP</div>
<div style="position:absolute;left:36px;top:476px;width:5px;height:1px;background:repeating-linear-gradient(90deg,#909090 0 1px, transparent 1px 2px);"></div>
<div style="position:absolute;left:28.1px;top:472.32000000000005px;width:7.8px;height:7.4px;border:1px solid #a4a4a4;border-radius:1.5px;background:linear-gradient(#ffffff,#d8d8d8);"></div>
<svg style="left:28.2px;top:472.02000000000004px;" width="8" height="8" viewBox="0 0 8 8"><path d="M1.3 4 H6.3" stroke="#3f5fbf" stroke-width="1.1"/></svg>
<svg style="left:41px;top:471.22px;" width="13.5" height="10" viewBox="0 0 13.5 10"><path d="M0.6 1.8 H1.2 L1.9 0.6 H3.7 L4.4 1.8 H8.6 V4.2 H0.6Z" fill="#ffff60" stroke="#000" stroke-width="1.1"/><path d="M0.6 1.8 V9 H9.2 L12.8 4.4 H3.8 L0.6 9" fill="#e4e400" stroke="#000" stroke-width="1.1" stroke-linejoin="round"/></svg>
<div style="position:absolute;left:57.90px;top:471.09px;font-size:9.6px;line-height:9.6px;white-space:pre;color:#000;font-weight:normal;transform-origin:0 0;transform:scaleX(0.8753);">PENGAPIAN (4)</div>
<div style="position:absolute;left:49px;top:489px;width:8px;height:1px;background:repeating-linear-gradient(90deg,#909090 0 1px, transparent 1px 2px);"></div>
<svg style="left:57.3px;top:483.45500000000004px;" width="12" height="12" viewBox="0 0 12 12"><rect x="0" y="0" width="12" height="12" fill="#0000ff"/><rect x="1.2" y="1.2" width="2.6" height="1.8" fill="#c8c8b0"/><rect x="4.8" y="1.2" width="2.3" height="1.8" fill="#c8c8b0"/><rect x="8.2" y="1.2" width="2.6" height="1.8" fill="#c8c8b0"/><rect x="1.2" y="3.8" width="2.6" height="1.8" fill="#c8c8b0"/><rect x="1.2" y="6.4" width="2.6" height="1.8" fill="#c8c8b0"/><rect x="1.2" y="9.0" width="2.6" height="1.8" fill="#c8c8b0"/><rect x="4.6" y="3.6" width="6.4" height="7.4" fill="#fff"/><path d="M7.6 3.4 V11 M4.4 6.2 H11" stroke="#000" stroke-width="1.2"/><path d="M4.4 8.8 H11" stroke="#444" stroke-width="0.7"/></svg>
<div style="position:absolute;left:73.40px;top:484.43px;font-size:9.6px;line-height:9.6px;white-space:pre;color:#000;font-weight:normal;transform-origin:0 0;transform:scaleX(0.8347);">NETRAL</div>
<div style="position:absolute;left:49px;top:503px;width:8px;height:1px;background:repeating-linear-gradient(90deg,#909090 0 1px, transparent 1px 2px);"></div>
<svg style="left:57.3px;top:496.79px;" width="12" height="12" viewBox="0 0 12 12"><rect x="0" y="0" width="12" height="12" fill="#0000ff"/><rect x="1.2" y="1.2" width="2.6" height="1.8" fill="#c8c8b0"/><rect x="4.8" y="1.2" width="2.3" height="1.8" fill="#c8c8b0"/><rect x="8.2" y="1.2" width="2.6" height="1.8" fill="#c8c8b0"/><rect x="1.2" y="3.8" width="2.6" height="1.8" fill="#c8c8b0"/><rect x="1.2" y="6.4" width="2.6" height="1.8" fill="#c8c8b0"/><rect x="1.2" y="9.0" width="2.6" height="1.8" fill="#c8c8b0"/><rect x="4.6" y="3.6" width="6.4" height="7.4" fill="#fff"/><path d="M7.6 3.4 V11 M4.4 6.2 H11" stroke="#000" stroke-width="1.2"/><path d="M4.4 8.8 H11" stroke="#444" stroke-width="0.7"/></svg>
<div style="position:absolute;left:73.40px;top:497.76px;font-size:9.6px;line-height:9.6px;white-space:pre;color:#000;font-weight:normal;transform-origin:0 0;transform:scaleX(0.9448);">GIGI 1 - 2</div>
<div style="position:absolute;left:49px;top:516px;width:8px;height:1px;background:repeating-linear-gradient(90deg,#909090 0 1px, transparent 1px 2px);"></div>
<svg style="left:57.3px;top:510.125px;" width="12" height="12" viewBox="0 0 12 12"><rect x="0" y="0" width="12" height="12" fill="#0000ff"/><rect x="1.2" y="1.2" width="2.6" height="1.8" fill="#c8c8b0"/><rect x="4.8" y="1.2" width="2.3" height="1.8" fill="#c8c8b0"/><rect x="8.2" y="1.2" width="2.6" height="1.8" fill="#c8c8b0"/><rect x="1.2" y="3.8" width="2.6" height="1.8" fill="#c8c8b0"/><rect x="1.2" y="6.4" width="2.6" height="1.8" fill="#c8c8b0"/><rect x="1.2" y="9.0" width="2.6" height="1.8" fill="#c8c8b0"/><rect x="4.6" y="3.6" width="6.4" height="7.4" fill="#fff"/><path d="M7.6 3.4 V11 M4.4 6.2 H11" stroke="#000" stroke-width="1.2"/><path d="M4.4 8.8 H11" stroke="#444" stroke-width="0.7"/></svg>
<div style="position:absolute;left:73.40px;top:511.10px;font-size:9.6px;line-height:9.6px;white-space:pre;color:#000;font-weight:normal;transform-origin:0 0;transform:scaleX(0.9496);">GIGI 3 - 4</div>
<div style="position:absolute;left:49px;top:529px;width:8px;height:1px;background:repeating-linear-gradient(90deg,#909090 0 1px, transparent 1px 2px);"></div>
<svg style="left:57.3px;top:523.4599999999999px;" width="12" height="12" viewBox="0 0 12 12"><rect x="0" y="0" width="12" height="12" fill="#0000ff"/><rect x="1.2" y="1.2" width="2.6" height="1.8" fill="#c8c8b0"/><rect x="4.8" y="1.2" width="2.3" height="1.8" fill="#c8c8b0"/><rect x="8.2" y="1.2" width="2.6" height="1.8" fill="#c8c8b0"/><rect x="1.2" y="3.8" width="2.6" height="1.8" fill="#c8c8b0"/><rect x="1.2" y="6.4" width="2.6" height="1.8" fill="#c8c8b0"/><rect x="1.2" y="9.0" width="2.6" height="1.8" fill="#c8c8b0"/><rect x="4.6" y="3.6" width="6.4" height="7.4" fill="#fff"/><path d="M7.6 3.4 V11 M4.4 6.2 H11" stroke="#000" stroke-width="1.2"/><path d="M4.4 8.8 H11" stroke="#444" stroke-width="0.7"/></svg>
<div style="position:absolute;left:73.40px;top:524.43px;font-size:9.6px;line-height:9.6px;white-space:pre;color:#000;font-weight:normal;transform-origin:0 0;transform:scaleX(0.9448);">GIGI 5 - 6</div>
<div style="position:absolute;left:36px;top:543px;width:5px;height:1px;background:repeating-linear-gradient(90deg,#909090 0 1px, transparent 1px 2px);"></div>
<div style="position:absolute;left:28.1px;top:538.9949999999999px;width:7.8px;height:7.4px;border:1px solid #a4a4a4;border-radius:1.5px;background:linear-gradient(#ffffff,#d8d8d8);"></div>
<svg style="left:28.2px;top:538.6949999999999px;" width="8" height="8" viewBox="0 0 8 8"><path d="M1.3 4 H6.3" stroke="#3f5fbf" stroke-width="1.1"/></svg>
<svg style="left:41px;top:537.895px;" width="13.5" height="10" viewBox="0 0 13.5 10"><path d="M0.6 1.8 H1.2 L1.9 0.6 H3.7 L4.4 1.8 H8.6 V4.2 H0.6Z" fill="#ffff60" stroke="#000" stroke-width="1.1"/><path d="M0.6 1.8 V9 H9.2 L12.8 4.4 H3.8 L0.6 9" fill="#e4e400" stroke="#000" stroke-width="1.1" stroke-linejoin="round"/></svg>
<div style="position:absolute;left:57.90px;top:537.77px;font-size:9.6px;line-height:9.6px;white-space:pre;color:#000;font-weight:normal;transform-origin:0 0;transform:scaleX(0.8772);">PENGATURAN LAIN (5)</div>
<div style="position:absolute;left:49px;top:556px;width:8px;height:1px;background:repeating-linear-gradient(90deg,#909090 0 1px, transparent 1px 2px);"></div>
<svg style="left:57.3px;top:550.13px;" width="12" height="12" viewBox="0 0 12 12"><rect x="0" y="0" width="12" height="12" fill="#0000ff"/><rect x="1.2" y="1.2" width="2.6" height="1.8" fill="#c8c8b0"/><rect x="4.8" y="1.2" width="2.3" height="1.8" fill="#c8c8b0"/><rect x="8.2" y="1.2" width="2.6" height="1.8" fill="#c8c8b0"/><rect x="1.2" y="3.8" width="2.6" height="1.8" fill="#c8c8b0"/><rect x="1.2" y="6.4" width="2.6" height="1.8" fill="#c8c8b0"/><rect x="1.2" y="9.0" width="2.6" height="1.8" fill="#c8c8b0"/><rect x="4.6" y="3.6" width="6.4" height="7.4" fill="#fff"/><path d="M7.6 3.4 V11 M4.4 6.2 H11" stroke="#000" stroke-width="1.2"/><path d="M4.4 8.8 H11" stroke="#444" stroke-width="0.7"/></svg>
<div style="position:absolute;left:73.40px;top:551.10px;font-size:9.6px;line-height:9.6px;white-space:pre;color:#000;font-weight:normal;transform-origin:0 0;transform:scaleX(0.8793);">KOREKSI AFR TIAP GIGI</div>
<div style="position:absolute;left:49px;top:569px;width:8px;height:1px;background:repeating-linear-gradient(90deg,#909090 0 1px, transparent 1px 2px);"></div>
<svg style="left:57.3px;top:563.465px;" width="12" height="12" viewBox="0 0 12 12"><rect x="0" y="0" width="12" height="12" fill="#0000ff"/><rect x="1.2" y="1.2" width="2.6" height="1.8" fill="#c8c8b0"/><rect x="4.8" y="1.2" width="2.3" height="1.8" fill="#c8c8b0"/><rect x="8.2" y="1.2" width="2.6" height="1.8" fill="#c8c8b0"/><rect x="1.2" y="3.8" width="2.6" height="1.8" fill="#c8c8b0"/><rect x="1.2" y="6.4" width="2.6" height="1.8" fill="#c8c8b0"/><rect x="1.2" y="9.0" width="2.6" height="1.8" fill="#c8c8b0"/><rect x="4.6" y="3.6" width="6.4" height="7.4" fill="#fff"/><path d="M7.6 3.4 V11 M4.4 6.2 H11" stroke="#000" stroke-width="1.2"/><path d="M4.4 8.8 H11" stroke="#444" stroke-width="0.7"/></svg>
<div style="position:absolute;left:73.40px;top:564.44px;font-size:9.6px;line-height:9.6px;white-space:pre;color:#000;font-weight:normal;transform-origin:0 0;transform:scaleX(0.8787);">START INJEKTOR TIMING SUHU</div>
<div style="position:absolute;left:49px;top:583px;width:8px;height:1px;background:repeating-linear-gradient(90deg,#909090 0 1px, transparent 1px 2px);"></div>
<svg style="left:57.3px;top:576.8000000000001px;" width="12" height="12" viewBox="0 0 12 12"><rect x="0" y="0" width="12" height="12" fill="#0000ff"/><rect x="1.2" y="1.2" width="2.6" height="1.8" fill="#c8c8b0"/><rect x="4.8" y="1.2" width="2.3" height="1.8" fill="#c8c8b0"/><rect x="8.2" y="1.2" width="2.6" height="1.8" fill="#c8c8b0"/><rect x="1.2" y="3.8" width="2.6" height="1.8" fill="#c8c8b0"/><rect x="1.2" y="6.4" width="2.6" height="1.8" fill="#c8c8b0"/><rect x="1.2" y="9.0" width="2.6" height="1.8" fill="#c8c8b0"/><rect x="4.6" y="3.6" width="6.4" height="7.4" fill="#fff"/><path d="M7.6 3.4 V11 M4.4 6.2 H11" stroke="#000" stroke-width="1.2"/><path d="M4.4 8.8 H11" stroke="#444" stroke-width="0.7"/></svg>
<div style="position:absolute;left:73.40px;top:577.77px;font-size:9.6px;line-height:9.6px;white-space:pre;color:#000;font-weight:normal;transform-origin:0 0;transform:scaleX(0.8787);">START INJEKTOR TIMING SUHU</div>
<div style="position:absolute;left:49px;top:596px;width:8px;height:1px;background:repeating-linear-gradient(90deg,#909090 0 1px, transparent 1px 2px);"></div>
<svg style="left:57.3px;top:590.135px;" width="12" height="12" viewBox="0 0 12 12"><rect x="0" y="0" width="12" height="12" fill="#0000ff"/><rect x="1.2" y="1.2" width="2.6" height="1.8" fill="#c8c8b0"/><rect x="4.8" y="1.2" width="2.3" height="1.8" fill="#c8c8b0"/><rect x="8.2" y="1.2" width="2.6" height="1.8" fill="#c8c8b0"/><rect x="1.2" y="3.8" width="2.6" height="1.8" fill="#c8c8b0"/><rect x="1.2" y="6.4" width="2.6" height="1.8" fill="#c8c8b0"/><rect x="1.2" y="9.0" width="2.6" height="1.8" fill="#c8c8b0"/><rect x="4.6" y="3.6" width="6.4" height="7.4" fill="#fff"/><path d="M7.6 3.4 V11 M4.4 6.2 H11" stroke="#000" stroke-width="1.2"/><path d="M4.4 8.8 H11" stroke="#444" stroke-width="0.7"/></svg>
<div style="position:absolute;left:73.40px;top:591.11px;font-size:9.6px;line-height:9.6px;white-space:pre;color:#000;font-weight:normal;transform-origin:0 0;transform:scaleX(0.8402);">MAP SENSOR VOLTAGE SCALE</div>
<div style="position:absolute;left:49px;top:609px;width:8px;height:1px;background:repeating-linear-gradient(90deg,#909090 0 1px, transparent 1px 2px);"></div>
<svg style="left:57.3px;top:603.4699999999999px;" width="12" height="12" viewBox="0 0 12 12"><rect x="0" y="0" width="12" height="12" fill="#0000ff"/><rect x="1.2" y="1.2" width="2.6" height="1.8" fill="#c8c8b0"/><rect x="4.8" y="1.2" width="2.3" height="1.8" fill="#c8c8b0"/><rect x="8.2" y="1.2" width="2.6" height="1.8" fill="#c8c8b0"/><rect x="1.2" y="3.8" width="2.6" height="1.8" fill="#c8c8b0"/><rect x="1.2" y="6.4" width="2.6" height="1.8" fill="#c8c8b0"/><rect x="1.2" y="9.0" width="2.6" height="1.8" fill="#c8c8b0"/><rect x="4.6" y="3.6" width="6.4" height="7.4" fill="#fff"/><path d="M7.6 3.4 V11 M4.4 6.2 H11" stroke="#000" stroke-width="1.2"/><path d="M4.4 8.8 H11" stroke="#444" stroke-width="0.7"/></svg>
<div style="position:absolute;left:73.40px;top:604.44px;font-size:9.6px;line-height:9.6px;white-space:pre;color:#000;font-weight:normal;transform-origin:0 0;transform:scaleX(0.8384);">ECT SENSOR VOLTAGE SCALE</div>
<div style="position:absolute;left:36px;top:623px;width:5px;height:1px;background:repeating-linear-gradient(90deg,#909090 0 1px, transparent 1px 2px);"></div>
<div style="position:absolute;left:28.1px;top:619.0049999999999px;width:7.8px;height:7.4px;border:1px solid #a4a4a4;border-radius:1.5px;background:linear-gradient(#ffffff,#d8d8d8);"></div>
<svg style="left:28.2px;top:618.7049999999999px;" width="8" height="8" viewBox="0 0 8 8"><path d="M1.3 4 H6.3" stroke="#3f5fbf" stroke-width="1.1"/><path d="M3.8 1.5 V6.5" stroke="#3f5fbf" stroke-width="1.1"/></svg>
<svg style="left:41px;top:618.1049999999999px;" width="10" height="9.5" viewBox="0 0 10 9.5"><path d="M0.6 1.8 H1.2 L1.9 0.6 H3.7 L4.4 1.8 H8.8 V8.6 H0.6Z" fill="#ffff80" stroke="#000" stroke-width="1.1"/></svg>
<div style="position:absolute;left:57.90px;top:617.78px;font-size:9.6px;line-height:9.6px;white-space:pre;color:#000;font-weight:normal;transform-origin:0 0;transform:scaleX(0.9132);">SWITCH (2)</div>
<div style="position:absolute;left:36px;top:636px;width:5px;height:1px;background:repeating-linear-gradient(90deg,#909090 0 1px, transparent 1px 2px);"></div>
<div style="position:absolute;left:28.1px;top:632.3399999999999px;width:7.8px;height:7.4px;border:1px solid #a4a4a4;border-radius:1.5px;background:linear-gradient(#ffffff,#d8d8d8);"></div>
<svg style="left:28.2px;top:632.04px;" width="8" height="8" viewBox="0 0 8 8"><path d="M1.3 4 H6.3" stroke="#3f5fbf" stroke-width="1.1"/><path d="M3.8 1.5 V6.5" stroke="#3f5fbf" stroke-width="1.1"/></svg>
<svg style="left:41px;top:631.4399999999999px;" width="10" height="9.5" viewBox="0 0 10 9.5"><path d="M0.6 1.8 H1.2 L1.9 0.6 H3.7 L4.4 1.8 H8.8 V8.6 H0.6Z" fill="#ffff80" stroke="#000" stroke-width="1.1"/></svg>
<div style="position:absolute;left:57.90px;top:631.11px;font-size:9.6px;line-height:9.6px;white-space:pre;color:#000;font-weight:normal;transform-origin:0 0;transform:scaleX(0.9059);">DTC (1)</div>
<div style="position:absolute;left:36px;top:649px;width:5px;height:1px;background:repeating-linear-gradient(90deg,#909090 0 1px, transparent 1px 2px);"></div>
<div style="position:absolute;left:28.1px;top:645.675px;width:7.8px;height:7.4px;border:1px solid #a4a4a4;border-radius:1.5px;background:linear-gradient(#ffffff,#d8d8d8);"></div>
<svg style="left:28.2px;top:645.375px;" width="8" height="8" viewBox="0 0 8 8"><path d="M1.3 4 H6.3" stroke="#3f5fbf" stroke-width="1.1"/><path d="M3.8 1.5 V6.5" stroke="#3f5fbf" stroke-width="1.1"/></svg>
<svg style="left:41px;top:644.775px;" width="10" height="9.5" viewBox="0 0 10 9.5"><path d="M0.6 1.8 H1.2 L1.9 0.6 H3.7 L4.4 1.8 H8.8 V8.6 H0.6Z" fill="#ffff80" stroke="#000" stroke-width="1.1"/></svg>
<div style="position:absolute;left:57.90px;top:644.45px;font-size:9.6px;line-height:9.6px;white-space:pre;color:#000;font-weight:normal;transform-origin:0 0;transform:scaleX(0.8900);">ECM INFORMASI (2)</div>
<div style="position:absolute;left:17px;top:663px;width:8.5px;height:1px;background:repeating-linear-gradient(90deg,#909090 0 1px, transparent 1px 2px);"></div>
<svg style="left:25.9px;top:657.71px;" width="11.5" height="10" viewBox="0 0 11.5 10"><path d="M0.3 2.6 Q1.5 0.6 3.5 0.8 H11.2 V2.7 H8.6 V7.2 Q8.6 8.2 9.6 8.2 Q10.4 8.2 10.7 7.3 L11.3 7.6 Q10.8 9.8 8.9 9.8 Q6.8 9.8 6.8 7.6 V2.7 H4.9 Q4.6 7 2.9 9.6 Q2.3 10 1.8 9.7 Q1.3 9.2 2.0 8.6 Q3.2 6.4 3.2 2.7 Q1.7 2.7 0.9 3.3Z" fill="#000" stroke="#000" stroke-width="0.6" stroke-linejoin="round"/></svg>
<div style="position:absolute;left:41.90px;top:657.78px;font-size:9.6px;line-height:9.6px;white-space:pre;color:#000;font-weight:normal;transform-origin:0 0;transform:scaleX(0.9454);">By.amam.tech</div>
<div style="position:absolute;left:17px;top:676px;width:8.5px;height:1px;background:repeating-linear-gradient(90deg,#909090 0 1px, transparent 1px 2px);"></div>
<svg style="left:25.9px;top:671.045px;" width="11.5" height="10" viewBox="0 0 11.5 10"><path d="M0.3 2.6 Q1.5 0.6 3.5 0.8 H11.2 V2.7 H8.6 V7.2 Q8.6 8.2 9.6 8.2 Q10.4 8.2 10.7 7.3 L11.3 7.6 Q10.8 9.8 8.9 9.8 Q6.8 9.8 6.8 7.6 V2.7 H4.9 Q4.6 7 2.9 9.6 Q2.3 10 1.8 9.7 Q1.3 9.2 2.0 8.6 Q3.2 6.4 3.2 2.7 Q1.7 2.7 0.9 3.3Z" fill="#000" stroke="#000" stroke-width="0.6" stroke-linejoin="round"/></svg>
<div style="position:absolute;left:41.90px;top:671.12px;font-size:9.6px;line-height:9.6px;white-space:pre;color:#000;font-weight:normal;transform-origin:0 0;transform:scaleX(0.9385);">Start : 8000_ Checksum : 0</div>
<div style="position:absolute;left:17px;top:689px;width:8.5px;height:1px;background:repeating-linear-gradient(90deg,#909090 0 1px, transparent 1px 2px);"></div>
<svg style="left:25.9px;top:684.3799999999999px;" width="11.5" height="10" viewBox="0 0 11.5 10"><path d="M0.3 2.6 Q1.5 0.6 3.5 0.8 H11.2 V2.7 H8.6 V7.2 Q8.6 8.2 9.6 8.2 Q10.4 8.2 10.7 7.3 L11.3 7.6 Q10.8 9.8 8.9 9.8 Q6.8 9.8 6.8 7.6 V2.7 H4.9 Q4.6 7 2.9 9.6 Q2.3 10 1.8 9.7 Q1.3 9.2 2.0 8.6 Q3.2 6.4 3.2 2.7 Q1.7 2.7 0.9 3.3Z" fill="#000" stroke="#000" stroke-width="0.6" stroke-linejoin="round"/></svg>
<div style="position:absolute;left:41.90px;top:684.45px;font-size:9.6px;line-height:9.6px;white-space:pre;color:#000;font-weight:normal;transform-origin:0 0;transform:scaleX(0.9057);">End : 17FFF</div>
<div style="position:absolute;left:201.5px;top:309px;width:6px;height:468px;background:#d8e4f0;"></div>
<div style="position:absolute;left:217px;top:334.6px;width:124.39999999999998px;height:376.50999999999993px;background:#e2e2e2;"></div>
<div style="position:absolute;left:217px;top:334.6px;width:61px;height:11.699999999999966px;background:#f0f0f0;border-top:1px solid #fff;border-left:1px solid #fff;border-bottom:1px solid #a0a0a0;border-right:1px solid #c0c0c0;"></div>
<div style="position:absolute;left:279.6px;top:334.6px;width:61.799999999999955px;height:11.699999999999966px;background:#dcdcdc;border-top:1px solid #fff;border-left:1px solid #fff;border-bottom:1px solid #a0a0a0;border-right:1px solid #c0c0c0;"></div>
<div style="position:absolute;left:278px;top:334.6px;width:1.6000000000000227px;height:375.30999999999995px;background:#e6e6e6;"></div>
<div style="position:absolute;left:217px;top:347.7px;width:61px;height:362.21px;background:#d8d8d8;"></div>
<div style="position:absolute;left:279.6px;top:347.7px;width:61.799999999999955px;height:362.21px;background:#dcdcdc;"></div>
<div style="position:absolute;left:217px;top:709.7099999999999px;width:62px;height:1.4px;background:#fafafa;"></div>
<div style="position:absolute;left:217px;top:347.7px;width:61px;height:11.99px;background:#dedede;border-top:1px solid #fff;border-left:1px solid #fff;border-bottom:1px solid #a0a0a0;border-right:1px solid #c8c8c8;"></div>
<div style="position:absolute;left:279.6px;top:347.7px;width:61.799999999999955px;height:12.290000000000001px;background:#a5dada;border:1px solid #222;"></div>
<div style="position:absolute;left:269.01px;top:349.19px;font-size:9.7px;line-height:9.7px;white-space:pre;color:#000;font-weight:normal;transform-origin:0 0;transform:scaleX(0.9);transform-origin:100% 0;">1</div>
<div style="position:absolute;left:323.23px;top:349.19px;font-size:9.7px;line-height:9.7px;white-space:pre;color:#000;font-weight:normal;transform-origin:0 0;transform:scaleX(0.9);transform-origin:100% 0;">800</div>
<div style="position:absolute;left:217px;top:360.19px;width:61px;height:11.99px;background:#f0f0f0;border-top:1px solid #fff;border-left:1px solid #fff;border-bottom:1px solid #a0a0a0;border-right:1px solid #c8c8c8;"></div>
<div style="position:absolute;left:279.6px;top:360.19px;width:61.799999999999955px;height:11.290000000000001px;background:#9cf9f9;"></div>
<div style="position:absolute;left:269.01px;top:361.68px;font-size:9.7px;line-height:9.7px;white-space:pre;color:#000;font-weight:normal;transform-origin:0 0;transform:scaleX(0.9);transform-origin:100% 0;">2</div>
<div style="position:absolute;left:317.84px;top:361.68px;font-size:9.7px;line-height:9.7px;white-space:pre;color:#000;font-weight:normal;transform-origin:0 0;transform:scaleX(0.9);transform-origin:100% 0;">1000</div>
<div style="position:absolute;left:217px;top:372.68px;width:61px;height:11.99px;background:#f0f0f0;border-top:1px solid #fff;border-left:1px solid #fff;border-bottom:1px solid #a0a0a0;border-right:1px solid #c8c8c8;"></div>
<div style="position:absolute;left:279.6px;top:372.68px;width:61.799999999999955px;height:11.290000000000001px;background:#9ef5f5;"></div>
<div style="position:absolute;left:269.01px;top:374.17px;font-size:9.7px;line-height:9.7px;white-space:pre;color:#000;font-weight:normal;transform-origin:0 0;transform:scaleX(0.9);transform-origin:100% 0;">3</div>
<div style="position:absolute;left:317.84px;top:374.17px;font-size:9.7px;line-height:9.7px;white-space:pre;color:#000;font-weight:normal;transform-origin:0 0;transform:scaleX(0.9);transform-origin:100% 0;">1200</div>
<div style="position:absolute;left:217px;top:385.16999999999996px;width:61px;height:11.99px;background:#f0f0f0;border-top:1px solid #fff;border-left:1px solid #fff;border-bottom:1px solid #a0a0a0;border-right:1px solid #c8c8c8;"></div>
<div style="position:absolute;left:279.6px;top:385.16999999999996px;width:61.799999999999955px;height:11.290000000000001px;background:#9ff4f4;"></div>
<div style="position:absolute;left:269.01px;top:386.66px;font-size:9.7px;line-height:9.7px;white-space:pre;color:#000;font-weight:normal;transform-origin:0 0;transform:scaleX(0.9);transform-origin:100% 0;">4</div>
<div style="position:absolute;left:317.84px;top:386.66px;font-size:9.7px;line-height:9.7px;white-space:pre;color:#000;font-weight:normal;transform-origin:0 0;transform:scaleX(0.9);transform-origin:100% 0;">1300</div>
<div style="position:absolute;left:217px;top:397.65999999999997px;width:61px;height:11.99px;background:#f0f0f0;border-top:1px solid #fff;border-left:1px solid #fff;border-bottom:1px solid #a0a0a0;border-right:1px solid #c8c8c8;"></div>
<div style="position:absolute;left:279.6px;top:397.65999999999997px;width:61.799999999999955px;height:11.290000000000001px;background:#a0f2f2;"></div>
<div style="position:absolute;left:269.01px;top:399.15px;font-size:9.7px;line-height:9.7px;white-space:pre;color:#000;font-weight:normal;transform-origin:0 0;transform:scaleX(0.9);transform-origin:100% 0;">5</div>
<div style="position:absolute;left:317.84px;top:399.15px;font-size:9.7px;line-height:9.7px;white-space:pre;color:#000;font-weight:normal;transform-origin:0 0;transform:scaleX(0.9);transform-origin:100% 0;">1400</div>
<div style="position:absolute;left:217px;top:410.15px;width:61px;height:11.99px;background:#f0f0f0;border-top:1px solid #fff;border-left:1px solid #fff;border-bottom:1px solid #a0a0a0;border-right:1px solid #c8c8c8;"></div>
<div style="position:absolute;left:279.6px;top:410.15px;width:61.799999999999955px;height:11.290000000000001px;background:#a1f0f0;"></div>
<div style="position:absolute;left:269.01px;top:411.64px;font-size:9.7px;line-height:9.7px;white-space:pre;color:#000;font-weight:normal;transform-origin:0 0;transform:scaleX(0.9);transform-origin:100% 0;">6</div>
<div style="position:absolute;left:317.84px;top:411.64px;font-size:9.7px;line-height:9.7px;white-space:pre;color:#000;font-weight:normal;transform-origin:0 0;transform:scaleX(0.9);transform-origin:100% 0;">1500</div>
<div style="position:absolute;left:217px;top:422.64px;width:61px;height:11.99px;background:#f0f0f0;border-top:1px solid #fff;border-left:1px solid #fff;border-bottom:1px solid #a0a0a0;border-right:1px solid #c8c8c8;"></div>
<div style="position:absolute;left:279.6px;top:422.64px;width:61.799999999999955px;height:11.290000000000001px;background:#a2efef;"></div>
<div style="position:absolute;left:269.01px;top:424.13px;font-size:9.7px;line-height:9.7px;white-space:pre;color:#000;font-weight:normal;transform-origin:0 0;transform:scaleX(0.9);transform-origin:100% 0;">7</div>
<div style="position:absolute;left:317.84px;top:424.13px;font-size:9.7px;line-height:9.7px;white-space:pre;color:#000;font-weight:normal;transform-origin:0 0;transform:scaleX(0.9);transform-origin:100% 0;">1600</div>
<div style="position:absolute;left:217px;top:435.13px;width:61px;height:11.99px;background:#f0f0f0;border-top:1px solid #fff;border-left:1px solid #fff;border-bottom:1px solid #a0a0a0;border-right:1px solid #c8c8c8;"></div>
<div style="position:absolute;left:279.6px;top:435.13px;width:61.799999999999955px;height:11.290000000000001px;background:#a4ebeb;"></div>
<div style="position:absolute;left:269.01px;top:436.62px;font-size:9.7px;line-height:9.7px;white-space:pre;color:#000;font-weight:normal;transform-origin:0 0;transform:scaleX(0.9);transform-origin:100% 0;">8</div>
<div style="position:absolute;left:317.84px;top:436.62px;font-size:9.7px;line-height:9.7px;white-space:pre;color:#000;font-weight:normal;transform-origin:0 0;transform:scaleX(0.9);transform-origin:100% 0;">1800</div>
<div style="position:absolute;left:217px;top:447.62px;width:61px;height:11.99px;background:#f0f0f0;border-top:1px solid #fff;border-left:1px solid #fff;border-bottom:1px solid #a0a0a0;border-right:1px solid #c8c8c8;"></div>
<div style="position:absolute;left:279.6px;top:447.62px;width:61.799999999999955px;height:11.290000000000001px;background:#a6e8e8;"></div>
<div style="position:absolute;left:269.01px;top:449.11px;font-size:9.7px;line-height:9.7px;white-space:pre;color:#000;font-weight:normal;transform-origin:0 0;transform:scaleX(0.9);transform-origin:100% 0;">9</div>
<div style="position:absolute;left:317.84px;top:449.11px;font-size:9.7px;line-height:9.7px;white-space:pre;color:#000;font-weight:normal;transform-origin:0 0;transform:scaleX(0.9);transform-origin:100% 0;">2000</div>
<div style="position:absolute;left:217px;top:460.11px;width:61px;height:11.99px;background:#f0f0f0;border-top:1px solid #fff;border-left:1px solid #fff;border-bottom:1px solid #a0a0a0;border-right:1px solid #c8c8c8;"></div>
<div style="position:absolute;left:279.6px;top:460.11px;width:61.799999999999955px;height:11.290000000000001px;background:#a8e4e4;"></div>
<div style="position:absolute;left:263.62px;top:461.60px;font-size:9.7px;line-height:9.7px;white-space:pre;color:#000;font-weight:normal;transform-origin:0 0;transform:scaleX(0.9);transform-origin:100% 0;">10</div>
<div style="position:absolute;left:317.84px;top:461.60px;font-size:9.7px;line-height:9.7px;white-space:pre;color:#000;font-weight:normal;transform-origin:0 0;transform:scaleX(0.9);transform-origin:100% 0;">2250</div>
<div style="position:absolute;left:217px;top:472.6px;width:61px;height:11.99px;background:#f0f0f0;border-top:1px solid #fff;border-left:1px solid #fff;border-bottom:1px solid #a0a0a0;border-right:1px solid #c8c8c8;"></div>
<div style="position:absolute;left:279.6px;top:472.6px;width:61.799999999999955px;height:11.290000000000001px;background:#abdfdf;"></div>
<div style="position:absolute;left:264.34px;top:474.09px;font-size:9.7px;line-height:9.7px;white-space:pre;color:#000;font-weight:normal;transform-origin:0 0;transform:scaleX(0.9);transform-origin:100% 0;">11</div>
<div style="position:absolute;left:317.84px;top:474.09px;font-size:9.7px;line-height:9.7px;white-space:pre;color:#000;font-weight:normal;transform-origin:0 0;transform:scaleX(0.9);transform-origin:100% 0;">2500</div>
<div style="position:absolute;left:217px;top:485.09000000000003px;width:61px;height:11.99px;background:#f0f0f0;border-top:1px solid #fff;border-left:1px solid #fff;border-bottom:1px solid #a0a0a0;border-right:1px solid #c8c8c8;"></div>
<div style="position:absolute;left:279.6px;top:485.09000000000003px;width:61.799999999999955px;height:11.290000000000001px;background:#addbdb;"></div>
<div style="position:absolute;left:263.62px;top:486.58px;font-size:9.7px;line-height:9.7px;white-space:pre;color:#000;font-weight:normal;transform-origin:0 0;transform:scaleX(0.9);transform-origin:100% 0;">12</div>
<div style="position:absolute;left:317.84px;top:486.58px;font-size:9.7px;line-height:9.7px;white-space:pre;color:#000;font-weight:normal;transform-origin:0 0;transform:scaleX(0.9);transform-origin:100% 0;">2750</div>
<div style="position:absolute;left:217px;top:497.58px;width:61px;height:11.99px;background:#f0f0f0;border-top:1px solid #fff;border-left:1px solid #fff;border-bottom:1px solid #a0a0a0;border-right:1px solid #c8c8c8;"></div>
<div style="position:absolute;left:279.6px;top:497.58px;width:61.799999999999955px;height:11.290000000000001px;background:#b0d7d7;"></div>
<div style="position:absolute;left:263.62px;top:499.07px;font-size:9.7px;line-height:9.7px;white-space:pre;color:#000;font-weight:normal;transform-origin:0 0;transform:scaleX(0.9);transform-origin:100% 0;">13</div>
<div style="position:absolute;left:317.84px;top:499.07px;font-size:9.7px;line-height:9.7px;white-space:pre;color:#000;font-weight:normal;transform-origin:0 0;transform:scaleX(0.9);transform-origin:100% 0;">3000</div>
<div style="position:absolute;left:217px;top:510.07px;width:61px;height:11.99px;background:#f0f0f0;border-top:1px solid #fff;border-left:1px solid #fff;border-bottom:1px solid #a0a0a0;border-right:1px solid #c8c8c8;"></div>
<div style="position:absolute;left:279.6px;top:510.07px;width:61.799999999999955px;height:11.290000000000001px;background:#b2d3d3;"></div>
<div style="position:absolute;left:263.62px;top:511.56px;font-size:9.7px;line-height:9.7px;white-space:pre;color:#000;font-weight:normal;transform-origin:0 0;transform:scaleX(0.9);transform-origin:100% 0;">14</div>
<div style="position:absolute;left:317.84px;top:511.56px;font-size:9.7px;line-height:9.7px;white-space:pre;color:#000;font-weight:normal;transform-origin:0 0;transform:scaleX(0.9);transform-origin:100% 0;">3250</div>
<div style="position:absolute;left:217px;top:522.56px;width:61px;height:11.99px;background:#f0f0f0;border-top:1px solid #fff;border-left:1px solid #fff;border-bottom:1px solid #a0a0a0;border-right:1px solid #c8c8c8;"></div>
<div style="position:absolute;left:279.6px;top:522.56px;width:61.799999999999955px;height:11.290000000000001px;background:#b5cece;"></div>
<div style="position:absolute;left:263.62px;top:524.05px;font-size:9.7px;line-height:9.7px;white-space:pre;color:#000;font-weight:normal;transform-origin:0 0;transform:scaleX(0.9);transform-origin:100% 0;">15</div>
<div style="position:absolute;left:317.84px;top:524.05px;font-size:9.7px;line-height:9.7px;white-space:pre;color:#000;font-weight:normal;transform-origin:0 0;transform:scaleX(0.9);transform-origin:100% 0;">3500</div>
<div style="position:absolute;left:217px;top:535.05px;width:61px;height:11.99px;background:#f0f0f0;border-top:1px solid #fff;border-left:1px solid #fff;border-bottom:1px solid #a0a0a0;border-right:1px solid #c8c8c8;"></div>
<div style="position:absolute;left:279.6px;top:535.05px;width:61.799999999999955px;height:11.290000000000001px;background:#b7caca;"></div>
<div style="position:absolute;left:263.62px;top:536.54px;font-size:9.7px;line-height:9.7px;white-space:pre;color:#000;font-weight:normal;transform-origin:0 0;transform:scaleX(0.9);transform-origin:100% 0;">16</div>
<div style="position:absolute;left:317.84px;top:536.54px;font-size:9.7px;line-height:9.7px;white-space:pre;color:#000;font-weight:normal;transform-origin:0 0;transform:scaleX(0.9);transform-origin:100% 0;">3750</div>
<div style="position:absolute;left:217px;top:547.54px;width:61px;height:11.99px;background:#f0f0f0;border-top:1px solid #fff;border-left:1px solid #fff;border-bottom:1px solid #a0a0a0;border-right:1px solid #c8c8c8;"></div>
<div style="position:absolute;left:279.6px;top:547.54px;width:61.799999999999955px;height:11.290000000000001px;background:#bac6c6;"></div>
<div style="position:absolute;left:263.62px;top:549.03px;font-size:9.7px;line-height:9.7px;white-space:pre;color:#000;font-weight:normal;transform-origin:0 0;transform:scaleX(0.9);transform-origin:100% 0;">17</div>
<div style="position:absolute;left:317.84px;top:549.03px;font-size:9.7px;line-height:9.7px;white-space:pre;color:#000;font-weight:normal;transform-origin:0 0;transform:scaleX(0.9);transform-origin:100% 0;">4000</div>
<div style="position:absolute;left:217px;top:560.03px;width:61px;height:11.99px;background:#f0f0f0;border-top:1px solid #fff;border-left:1px solid #fff;border-bottom:1px solid #a0a0a0;border-right:1px solid #c8c8c8;"></div>
<div style="position:absolute;left:279.6px;top:560.03px;width:61.799999999999955px;height:11.290000000000001px;background:#bcc2c2;"></div>
<div style="position:absolute;left:263.62px;top:561.52px;font-size:9.7px;line-height:9.7px;white-space:pre;color:#000;font-weight:normal;transform-origin:0 0;transform:scaleX(0.9);transform-origin:100% 0;">18</div>
<div style="position:absolute;left:317.84px;top:561.52px;font-size:9.7px;line-height:9.7px;white-space:pre;color:#000;font-weight:normal;transform-origin:0 0;transform:scaleX(0.9);transform-origin:100% 0;">4250</div>
<div style="position:absolute;left:217px;top:572.52px;width:61px;height:11.99px;background:#f0f0f0;border-top:1px solid #fff;border-left:1px solid #fff;border-bottom:1px solid #a0a0a0;border-right:1px solid #c8c8c8;"></div>
<div style="position:absolute;left:279.6px;top:572.52px;width:61.799999999999955px;height:11.290000000000001px;background:#bfbebe;"></div>
<div style="position:absolute;left:263.62px;top:574.01px;font-size:9.7px;line-height:9.7px;white-space:pre;color:#000;font-weight:normal;transform-origin:0 0;transform:scaleX(0.9);transform-origin:100% 0;">19</div>
<div style="position:absolute;left:317.84px;top:574.01px;font-size:9.7px;line-height:9.7px;white-space:pre;color:#000;font-weight:normal;transform-origin:0 0;transform:scaleX(0.9);transform-origin:100% 0;">4500</div>
<div style="position:absolute;left:217px;top:585.01px;width:61px;height:11.99px;background:#f0f0f0;border-top:1px solid #fff;border-left:1px solid #fff;border-bottom:1px solid #a0a0a0;border-right:1px solid #c8c8c8;"></div>
<div style="position:absolute;left:279.6px;top:585.01px;width:61.799999999999955px;height:11.290000000000001px;background:#c4b5b5;"></div>
<div style="position:absolute;left:263.62px;top:586.50px;font-size:9.7px;line-height:9.7px;white-space:pre;color:#000;font-weight:normal;transform-origin:0 0;transform:scaleX(0.9);transform-origin:100% 0;">20</div>
<div style="position:absolute;left:317.84px;top:586.50px;font-size:9.7px;line-height:9.7px;white-space:pre;color:#000;font-weight:normal;transform-origin:0 0;transform:scaleX(0.9);transform-origin:100% 0;">5000</div>
<div style="position:absolute;left:217px;top:597.5px;width:61px;height:11.99px;background:#f0f0f0;border-top:1px solid #fff;border-left:1px solid #fff;border-bottom:1px solid #a0a0a0;border-right:1px solid #c8c8c8;"></div>
<div style="position:absolute;left:279.6px;top:597.5px;width:61.799999999999955px;height:11.290000000000001px;background:#c9adad;"></div>
<div style="position:absolute;left:263.62px;top:598.99px;font-size:9.7px;line-height:9.7px;white-space:pre;color:#000;font-weight:normal;transform-origin:0 0;transform:scaleX(0.9);transform-origin:100% 0;">21</div>
<div style="position:absolute;left:317.84px;top:598.99px;font-size:9.7px;line-height:9.7px;white-space:pre;color:#000;font-weight:normal;transform-origin:0 0;transform:scaleX(0.9);transform-origin:100% 0;">5500</div>
<div style="position:absolute;left:217px;top:609.99px;width:61px;height:11.99px;background:#f0f0f0;border-top:1px solid #fff;border-left:1px solid #fff;border-bottom:1px solid #a0a0a0;border-right:1px solid #c8c8c8;"></div>
<div style="position:absolute;left:279.6px;top:609.99px;width:61.799999999999955px;height:11.290000000000001px;background:#cda4a4;"></div>
<div style="position:absolute;left:263.62px;top:611.48px;font-size:9.7px;line-height:9.7px;white-space:pre;color:#000;font-weight:normal;transform-origin:0 0;transform:scaleX(0.9);transform-origin:100% 0;">22</div>
<div style="position:absolute;left:317.84px;top:611.48px;font-size:9.7px;line-height:9.7px;white-space:pre;color:#000;font-weight:normal;transform-origin:0 0;transform:scaleX(0.9);transform-origin:100% 0;">6000</div>
<div style="position:absolute;left:217px;top:622.48px;width:61px;height:11.99px;background:#f0f0f0;border-top:1px solid #fff;border-left:1px solid #fff;border-bottom:1px solid #a0a0a0;border-right:1px solid #c8c8c8;"></div>
<div style="position:absolute;left:279.6px;top:622.48px;width:61.799999999999955px;height:11.290000000000001px;background:#d29c9c;"></div>
<div style="position:absolute;left:263.62px;top:623.97px;font-size:9.7px;line-height:9.7px;white-space:pre;color:#000;font-weight:normal;transform-origin:0 0;transform:scaleX(0.9);transform-origin:100% 0;">23</div>
<div style="position:absolute;left:317.84px;top:623.97px;font-size:9.7px;line-height:9.7px;white-space:pre;color:#000;font-weight:normal;transform-origin:0 0;transform:scaleX(0.9);transform-origin:100% 0;">6500</div>
<div style="position:absolute;left:217px;top:634.97px;width:61px;height:11.99px;background:#f0f0f0;border-top:1px solid #fff;border-left:1px solid #fff;border-bottom:1px solid #a0a0a0;border-right:1px solid #c8c8c8;"></div>
<div style="position:absolute;left:279.6px;top:634.97px;width:61.799999999999955px;height:11.290000000000001px;background:#d79393;"></div>
<div style="position:absolute;left:263.62px;top:636.46px;font-size:9.7px;line-height:9.7px;white-space:pre;color:#000;font-weight:normal;transform-origin:0 0;transform:scaleX(0.9);transform-origin:100% 0;">24</div>
<div style="position:absolute;left:317.84px;top:636.46px;font-size:9.7px;line-height:9.7px;white-space:pre;color:#000;font-weight:normal;transform-origin:0 0;transform:scaleX(0.9);transform-origin:100% 0;">7000</div>
<div style="position:absolute;left:217px;top:647.46px;width:61px;height:11.99px;background:#f0f0f0;border-top:1px solid #fff;border-left:1px solid #fff;border-bottom:1px solid #a0a0a0;border-right:1px solid #c8c8c8;"></div>
<div style="position:absolute;left:279.6px;top:647.46px;width:61.799999999999955px;height:11.290000000000001px;background:#dc8b8b;"></div>
<div style="position:absolute;left:263.62px;top:648.95px;font-size:9.7px;line-height:9.7px;white-space:pre;color:#000;font-weight:normal;transform-origin:0 0;transform:scaleX(0.9);transform-origin:100% 0;">25</div>
<div style="position:absolute;left:317.84px;top:648.95px;font-size:9.7px;line-height:9.7px;white-space:pre;color:#000;font-weight:normal;transform-origin:0 0;transform:scaleX(0.9);transform-origin:100% 0;">7500</div>
<div style="position:absolute;left:217px;top:659.95px;width:61px;height:11.99px;background:#f0f0f0;border-top:1px solid #fff;border-left:1px solid #fff;border-bottom:1px solid #a0a0a0;border-right:1px solid #c8c8c8;"></div>
<div style="position:absolute;left:279.6px;top:659.95px;width:61.799999999999955px;height:11.290000000000001px;background:#e18383;"></div>
<div style="position:absolute;left:263.62px;top:661.44px;font-size:9.7px;line-height:9.7px;white-space:pre;color:#000;font-weight:normal;transform-origin:0 0;transform:scaleX(0.9);transform-origin:100% 0;">26</div>
<div style="position:absolute;left:317.84px;top:661.44px;font-size:9.7px;line-height:9.7px;white-space:pre;color:#000;font-weight:normal;transform-origin:0 0;transform:scaleX(0.9);transform-origin:100% 0;">8000</div>
<div style="position:absolute;left:217px;top:672.44px;width:61px;height:11.99px;background:#f0f0f0;border-top:1px solid #fff;border-left:1px solid #fff;border-bottom:1px solid #a0a0a0;border-right:1px solid #c8c8c8;"></div>
<div style="position:absolute;left:279.6px;top:672.44px;width:61.799999999999955px;height:11.290000000000001px;background:#e67a7a;"></div>
<div style="position:absolute;left:263.62px;top:673.93px;font-size:9.7px;line-height:9.7px;white-space:pre;color:#000;font-weight:normal;transform-origin:0 0;transform:scaleX(0.9);transform-origin:100% 0;">27</div>
<div style="position:absolute;left:317.84px;top:673.93px;font-size:9.7px;line-height:9.7px;white-space:pre;color:#000;font-weight:normal;transform-origin:0 0;transform:scaleX(0.9);transform-origin:100% 0;">8500</div>
<div style="position:absolute;left:217px;top:684.9300000000001px;width:61px;height:11.99px;background:#f0f0f0;border-top:1px solid #fff;border-left:1px solid #fff;border-bottom:1px solid #a0a0a0;border-right:1px solid #c8c8c8;"></div>
<div style="position:absolute;left:279.6px;top:684.9300000000001px;width:61.799999999999955px;height:11.290000000000001px;background:#ef6b6b;"></div>
<div style="position:absolute;left:263.62px;top:686.42px;font-size:9.7px;line-height:9.7px;white-space:pre;color:#000;font-weight:normal;transform-origin:0 0;transform:scaleX(0.9);transform-origin:100% 0;">28</div>
<div style="position:absolute;left:317.84px;top:686.42px;font-size:9.7px;line-height:9.7px;white-space:pre;color:#000;font-weight:normal;transform-origin:0 0;transform:scaleX(0.9);transform-origin:100% 0;">9374</div>
<div style="position:absolute;left:217px;top:697.4200000000001px;width:61px;height:11.99px;background:#f0f0f0;border-top:1px solid #fff;border-left:1px solid #fff;border-bottom:1px solid #a0a0a0;border-right:1px solid #c8c8c8;"></div>
<div style="position:absolute;left:279.6px;top:697.4200000000001px;width:61.799999999999955px;height:11.290000000000001px;background:#ff5050;"></div>
<div style="position:absolute;left:263.62px;top:698.91px;font-size:9.7px;line-height:9.7px;white-space:pre;color:#000;font-weight:normal;transform-origin:0 0;transform:scaleX(0.9);transform-origin:100% 0;">29</div>
<div style="position:absolute;left:313.18px;top:698.91px;font-size:9.7px;line-height:9.7px;white-space:pre;color:#000;font-weight:normal;transform-origin:0 0;transform:scaleX(0.9);transform-origin:100% 0;">11000</div>
<div style="position:absolute;left:383.9px;top:336.1px;width:124.10000000000002px;height:376.60999999999996px;background:#e2e2e2;"></div>
<div style="position:absolute;left:383.9px;top:336.1px;width:61.10000000000002px;height:11.799999999999988px;background:#f0f0f0;border-top:1px solid #fff;border-left:1px solid #fff;border-bottom:1px solid #a0a0a0;border-right:1px solid #c0c0c0;"></div>
<div style="position:absolute;left:446.2px;top:336.1px;width:61.80000000000001px;height:11.799999999999988px;background:#dcdcdc;border-top:1px solid #fff;border-left:1px solid #fff;border-bottom:1px solid #a0a0a0;border-right:1px solid #c0c0c0;"></div>
<div style="position:absolute;left:445.0px;top:336.1px;width:1.1999999999999886px;height:375.40999999999997px;background:#e6e6e6;"></div>
<div style="position:absolute;left:383.9px;top:349.3px;width:61.10000000000002px;height:362.21px;background:#d8d8d8;"></div>
<div style="position:absolute;left:446.2px;top:349.3px;width:61.80000000000001px;height:362.21px;background:#dcdcdc;"></div>
<div style="position:absolute;left:383.9px;top:711.31px;width:62.10000000000002px;height:1.4px;background:#fafafa;"></div>
<div style="position:absolute;left:383.9px;top:349.3px;width:61.10000000000002px;height:11.99px;background:#dedede;border-top:1px solid #fff;border-left:1px solid #fff;border-bottom:1px solid #a0a0a0;border-right:1px solid #c8c8c8;"></div>
<div style="position:absolute;left:446.2px;top:349.3px;width:61.80000000000001px;height:12.290000000000001px;background:#a5dada;border:1px solid #222;"></div>
<div style="position:absolute;left:436.01px;top:350.79px;font-size:9.7px;line-height:9.7px;white-space:pre;color:#000;font-weight:normal;transform-origin:0 0;transform:scaleX(0.9);transform-origin:100% 0;">1</div>
<div style="position:absolute;left:492.53px;top:350.79px;font-size:9.7px;line-height:9.7px;white-space:pre;color:#000;font-weight:normal;transform-origin:0 0;transform:scaleX(0.9);transform-origin:100% 0;">0.0</div>
<div style="position:absolute;left:383.9px;top:361.79px;width:61.10000000000002px;height:11.99px;background:#f0f0f0;border-top:1px solid #fff;border-left:1px solid #fff;border-bottom:1px solid #a0a0a0;border-right:1px solid #c8c8c8;"></div>
<div style="position:absolute;left:446.2px;top:361.79px;width:61.80000000000001px;height:11.290000000000001px;background:#9afcfc;"></div>
<div style="position:absolute;left:436.01px;top:363.28px;font-size:9.7px;line-height:9.7px;white-space:pre;color:#000;font-weight:normal;transform-origin:0 0;transform:scaleX(0.9);transform-origin:100% 0;">2</div>
<div style="position:absolute;left:492.53px;top:363.28px;font-size:9.7px;line-height:9.7px;white-space:pre;color:#000;font-weight:normal;transform-origin:0 0;transform:scaleX(0.9);transform-origin:100% 0;">0.2</div>
<div style="position:absolute;left:383.9px;top:374.28000000000003px;width:61.10000000000002px;height:11.99px;background:#f0f0f0;border-top:1px solid #fff;border-left:1px solid #fff;border-bottom:1px solid #a0a0a0;border-right:1px solid #c8c8c8;"></div>
<div style="position:absolute;left:446.2px;top:374.28000000000003px;width:61.80000000000001px;height:11.290000000000001px;background:#9bfbfb;"></div>
<div style="position:absolute;left:436.01px;top:375.77px;font-size:9.7px;line-height:9.7px;white-space:pre;color:#000;font-weight:normal;transform-origin:0 0;transform:scaleX(0.9);transform-origin:100% 0;">3</div>
<div style="position:absolute;left:492.53px;top:375.77px;font-size:9.7px;line-height:9.7px;white-space:pre;color:#000;font-weight:normal;transform-origin:0 0;transform:scaleX(0.9);transform-origin:100% 0;">0.4</div>
<div style="position:absolute;left:383.9px;top:386.77px;width:61.10000000000002px;height:11.99px;background:#f0f0f0;border-top:1px solid #fff;border-left:1px solid #fff;border-bottom:1px solid #a0a0a0;border-right:1px solid #c8c8c8;"></div>
<div style="position:absolute;left:446.2px;top:386.77px;width:61.80000000000001px;height:11.290000000000001px;background:#9bfafa;"></div>
<div style="position:absolute;left:436.01px;top:388.26px;font-size:9.7px;line-height:9.7px;white-space:pre;color:#000;font-weight:normal;transform-origin:0 0;transform:scaleX(0.9);transform-origin:100% 0;">4</div>
<div style="position:absolute;left:492.53px;top:388.26px;font-size:9.7px;line-height:9.7px;white-space:pre;color:#000;font-weight:normal;transform-origin:0 0;transform:scaleX(0.9);transform-origin:100% 0;">1.0</div>
<div style="position:absolute;left:383.9px;top:399.26px;width:61.10000000000002px;height:11.99px;background:#f0f0f0;border-top:1px solid #fff;border-left:1px solid #fff;border-bottom:1px solid #a0a0a0;border-right:1px solid #c8c8c8;"></div>
<div style="position:absolute;left:446.2px;top:399.26px;width:61.80000000000001px;height:11.290000000000001px;background:#9cf9f9;"></div>
<div style="position:absolute;left:436.01px;top:400.75px;font-size:9.7px;line-height:9.7px;white-space:pre;color:#000;font-weight:normal;transform-origin:0 0;transform:scaleX(0.9);transform-origin:100% 0;">5</div>
<div style="position:absolute;left:492.53px;top:400.75px;font-size:9.7px;line-height:9.7px;white-space:pre;color:#000;font-weight:normal;transform-origin:0 0;transform:scaleX(0.9);transform-origin:100% 0;">1.5</div>
<div style="position:absolute;left:383.9px;top:411.75px;width:61.10000000000002px;height:11.99px;background:#f0f0f0;border-top:1px solid #fff;border-left:1px solid #fff;border-bottom:1px solid #a0a0a0;border-right:1px solid #c8c8c8;"></div>
<div style="position:absolute;left:446.2px;top:411.75px;width:61.80000000000001px;height:11.290000000000001px;background:#9df7f7;"></div>
<div style="position:absolute;left:436.01px;top:413.24px;font-size:9.7px;line-height:9.7px;white-space:pre;color:#000;font-weight:normal;transform-origin:0 0;transform:scaleX(0.9);transform-origin:100% 0;">6</div>
<div style="position:absolute;left:492.53px;top:413.24px;font-size:9.7px;line-height:9.7px;white-space:pre;color:#000;font-weight:normal;transform-origin:0 0;transform:scaleX(0.9);transform-origin:100% 0;">2.0</div>
<div style="position:absolute;left:383.9px;top:424.24px;width:61.10000000000002px;height:11.99px;background:#f0f0f0;border-top:1px solid #fff;border-left:1px solid #fff;border-bottom:1px solid #a0a0a0;border-right:1px solid #c8c8c8;"></div>
<div style="position:absolute;left:446.2px;top:424.24px;width:61.80000000000001px;height:11.290000000000001px;background:#9ef6f6;"></div>
<div style="position:absolute;left:436.01px;top:425.73px;font-size:9.7px;line-height:9.7px;white-space:pre;color:#000;font-weight:normal;transform-origin:0 0;transform:scaleX(0.9);transform-origin:100% 0;">7</div>
<div style="position:absolute;left:492.53px;top:425.73px;font-size:9.7px;line-height:9.7px;white-space:pre;color:#000;font-weight:normal;transform-origin:0 0;transform:scaleX(0.9);transform-origin:100% 0;">2.6</div>
<div style="position:absolute;left:383.9px;top:436.73px;width:61.10000000000002px;height:11.99px;background:#f0f0f0;border-top:1px solid #fff;border-left:1px solid #fff;border-bottom:1px solid #a0a0a0;border-right:1px solid #c8c8c8;"></div>
<div style="position:absolute;left:446.2px;top:436.73px;width:61.80000000000001px;height:11.290000000000001px;background:#9ef5f5;"></div>
<div style="position:absolute;left:436.01px;top:438.22px;font-size:9.7px;line-height:9.7px;white-space:pre;color:#000;font-weight:normal;transform-origin:0 0;transform:scaleX(0.9);transform-origin:100% 0;">8</div>
<div style="position:absolute;left:492.53px;top:438.22px;font-size:9.7px;line-height:9.7px;white-space:pre;color:#000;font-weight:normal;transform-origin:0 0;transform:scaleX(0.9);transform-origin:100% 0;">3.1</div>
<div style="position:absolute;left:383.9px;top:449.22px;width:61.10000000000002px;height:11.99px;background:#f0f0f0;border-top:1px solid #fff;border-left:1px solid #fff;border-bottom:1px solid #a0a0a0;border-right:1px solid #c8c8c8;"></div>
<div style="position:absolute;left:446.2px;top:449.22px;width:61.80000000000001px;height:11.290000000000001px;background:#a0f3f3;"></div>
<div style="position:absolute;left:436.01px;top:450.71px;font-size:9.7px;line-height:9.7px;white-space:pre;color:#000;font-weight:normal;transform-origin:0 0;transform:scaleX(0.9);transform-origin:100% 0;">9</div>
<div style="position:absolute;left:492.53px;top:450.71px;font-size:9.7px;line-height:9.7px;white-space:pre;color:#000;font-weight:normal;transform-origin:0 0;transform:scaleX(0.9);transform-origin:100% 0;">4.1</div>
<div style="position:absolute;left:383.9px;top:461.71000000000004px;width:61.10000000000002px;height:11.99px;background:#f0f0f0;border-top:1px solid #fff;border-left:1px solid #fff;border-bottom:1px solid #a0a0a0;border-right:1px solid #c8c8c8;"></div>
<div style="position:absolute;left:446.2px;top:461.71000000000004px;width:61.80000000000001px;height:11.290000000000001px;background:#a1f0f0;"></div>
<div style="position:absolute;left:430.62px;top:463.20px;font-size:9.7px;line-height:9.7px;white-space:pre;color:#000;font-weight:normal;transform-origin:0 0;transform:scaleX(0.9);transform-origin:100% 0;">10</div>
<div style="position:absolute;left:492.53px;top:463.20px;font-size:9.7px;line-height:9.7px;white-space:pre;color:#000;font-weight:normal;transform-origin:0 0;transform:scaleX(0.9);transform-origin:100% 0;">5.1</div>
<div style="position:absolute;left:383.9px;top:474.20000000000005px;width:61.10000000000002px;height:11.99px;background:#f0f0f0;border-top:1px solid #fff;border-left:1px solid #fff;border-bottom:1px solid #a0a0a0;border-right:1px solid #c8c8c8;"></div>
<div style="position:absolute;left:446.2px;top:474.20000000000005px;width:61.80000000000001px;height:11.290000000000001px;background:#a2eeee;"></div>
<div style="position:absolute;left:431.34px;top:475.69px;font-size:9.7px;line-height:9.7px;white-space:pre;color:#000;font-weight:normal;transform-origin:0 0;transform:scaleX(0.9);transform-origin:100% 0;">11</div>
<div style="position:absolute;left:492.53px;top:475.69px;font-size:9.7px;line-height:9.7px;white-space:pre;color:#000;font-weight:normal;transform-origin:0 0;transform:scaleX(0.9);transform-origin:100% 0;">6.1</div>
<div style="position:absolute;left:383.9px;top:486.69000000000005px;width:61.10000000000002px;height:11.99px;background:#f0f0f0;border-top:1px solid #fff;border-left:1px solid #fff;border-bottom:1px solid #a0a0a0;border-right:1px solid #c8c8c8;"></div>
<div style="position:absolute;left:446.2px;top:486.69000000000005px;width:61.80000000000001px;height:11.290000000000001px;background:#a4ebeb;"></div>
<div style="position:absolute;left:430.62px;top:488.18px;font-size:9.7px;line-height:9.7px;white-space:pre;color:#000;font-weight:normal;transform-origin:0 0;transform:scaleX(0.9);transform-origin:100% 0;">12</div>
<div style="position:absolute;left:492.53px;top:488.18px;font-size:9.7px;line-height:9.7px;white-space:pre;color:#000;font-weight:normal;transform-origin:0 0;transform:scaleX(0.9);transform-origin:100% 0;">7.2</div>
<div style="position:absolute;left:383.9px;top:499.18px;width:61.10000000000002px;height:11.99px;background:#f0f0f0;border-top:1px solid #fff;border-left:1px solid #fff;border-bottom:1px solid #a0a0a0;border-right:1px solid #c8c8c8;"></div>
<div style="position:absolute;left:446.2px;top:499.18px;width:61.80000000000001px;height:11.290000000000001px;background:#a5e9e9;"></div>
<div style="position:absolute;left:430.62px;top:500.67px;font-size:9.7px;line-height:9.7px;white-space:pre;color:#000;font-weight:normal;transform-origin:0 0;transform:scaleX(0.9);transform-origin:100% 0;">13</div>
<div style="position:absolute;left:492.53px;top:500.67px;font-size:9.7px;line-height:9.7px;white-space:pre;color:#000;font-weight:normal;transform-origin:0 0;transform:scaleX(0.9);transform-origin:100% 0;">8.2</div>
<div style="position:absolute;left:383.9px;top:511.67px;width:61.10000000000002px;height:11.99px;background:#f0f0f0;border-top:1px solid #fff;border-left:1px solid #fff;border-bottom:1px solid #a0a0a0;border-right:1px solid #c8c8c8;"></div>
<div style="position:absolute;left:446.2px;top:511.67px;width:61.80000000000001px;height:11.290000000000001px;background:#a8e4e4;"></div>
<div style="position:absolute;left:430.62px;top:513.16px;font-size:9.7px;line-height:9.7px;white-space:pre;color:#000;font-weight:normal;transform-origin:0 0;transform:scaleX(0.9);transform-origin:100% 0;">14</div>
<div style="position:absolute;left:487.14px;top:513.16px;font-size:9.7px;line-height:9.7px;white-space:pre;color:#000;font-weight:normal;transform-origin:0 0;transform:scaleX(0.9);transform-origin:100% 0;">10.2</div>
<div style="position:absolute;left:383.9px;top:524.1600000000001px;width:61.10000000000002px;height:11.99px;background:#f0f0f0;border-top:1px solid #fff;border-left:1px solid #fff;border-bottom:1px solid #a0a0a0;border-right:1px solid #c8c8c8;"></div>
<div style="position:absolute;left:446.2px;top:524.1600000000001px;width:61.80000000000001px;height:11.290000000000001px;background:#abe0e0;"></div>
<div style="position:absolute;left:430.62px;top:525.65px;font-size:9.7px;line-height:9.7px;white-space:pre;color:#000;font-weight:normal;transform-origin:0 0;transform:scaleX(0.9);transform-origin:100% 0;">15</div>
<div style="position:absolute;left:487.14px;top:525.65px;font-size:9.7px;line-height:9.7px;white-space:pre;color:#000;font-weight:normal;transform-origin:0 0;transform:scaleX(0.9);transform-origin:100% 0;">12.3</div>
<div style="position:absolute;left:383.9px;top:536.65px;width:61.10000000000002px;height:11.99px;background:#f0f0f0;border-top:1px solid #fff;border-left:1px solid #fff;border-bottom:1px solid #a0a0a0;border-right:1px solid #c8c8c8;"></div>
<div style="position:absolute;left:446.2px;top:536.65px;width:61.80000000000001px;height:11.290000000000001px;background:#addbdb;"></div>
<div style="position:absolute;left:430.62px;top:538.14px;font-size:9.7px;line-height:9.7px;white-space:pre;color:#000;font-weight:normal;transform-origin:0 0;transform:scaleX(0.9);transform-origin:100% 0;">16</div>
<div style="position:absolute;left:487.14px;top:538.14px;font-size:9.7px;line-height:9.7px;white-space:pre;color:#000;font-weight:normal;transform-origin:0 0;transform:scaleX(0.9);transform-origin:100% 0;">14.3</div>
<div style="position:absolute;left:383.9px;top:549.14px;width:61.10000000000002px;height:11.99px;background:#f0f0f0;border-top:1px solid #fff;border-left:1px solid #fff;border-bottom:1px solid #a0a0a0;border-right:1px solid #c8c8c8;"></div>
<div style="position:absolute;left:446.2px;top:549.14px;width:61.80000000000001px;height:11.290000000000001px;background:#b0d6d6;"></div>
<div style="position:absolute;left:430.62px;top:550.63px;font-size:9.7px;line-height:9.7px;white-space:pre;color:#000;font-weight:normal;transform-origin:0 0;transform:scaleX(0.9);transform-origin:100% 0;">17</div>
<div style="position:absolute;left:487.14px;top:550.63px;font-size:9.7px;line-height:9.7px;white-space:pre;color:#000;font-weight:normal;transform-origin:0 0;transform:scaleX(0.9);transform-origin:100% 0;">16.4</div>
<div style="position:absolute;left:383.9px;top:561.63px;width:61.10000000000002px;height:11.99px;background:#f0f0f0;border-top:1px solid #fff;border-left:1px solid #fff;border-bottom:1px solid #a0a0a0;border-right:1px solid #c8c8c8;"></div>
<div style="position:absolute;left:446.2px;top:561.63px;width:61.80000000000001px;height:11.290000000000001px;background:#b3d1d1;"></div>
<div style="position:absolute;left:430.62px;top:563.12px;font-size:9.7px;line-height:9.7px;white-space:pre;color:#000;font-weight:normal;transform-origin:0 0;transform:scaleX(0.9);transform-origin:100% 0;">18</div>
<div style="position:absolute;left:487.14px;top:563.12px;font-size:9.7px;line-height:9.7px;white-space:pre;color:#000;font-weight:normal;transform-origin:0 0;transform:scaleX(0.9);transform-origin:100% 0;">18.4</div>
<div style="position:absolute;left:383.9px;top:574.12px;width:61.10000000000002px;height:11.99px;background:#f0f0f0;border-top:1px solid #fff;border-left:1px solid #fff;border-bottom:1px solid #a0a0a0;border-right:1px solid #c8c8c8;"></div>
<div style="position:absolute;left:446.2px;top:574.12px;width:61.80000000000001px;height:11.290000000000001px;background:#b6cdcd;"></div>
<div style="position:absolute;left:430.62px;top:575.61px;font-size:9.7px;line-height:9.7px;white-space:pre;color:#000;font-weight:normal;transform-origin:0 0;transform:scaleX(0.9);transform-origin:100% 0;">19</div>
<div style="position:absolute;left:487.14px;top:575.61px;font-size:9.7px;line-height:9.7px;white-space:pre;color:#000;font-weight:normal;transform-origin:0 0;transform:scaleX(0.9);transform-origin:100% 0;">20.5</div>
<div style="position:absolute;left:383.9px;top:586.61px;width:61.10000000000002px;height:11.99px;background:#f0f0f0;border-top:1px solid #fff;border-left:1px solid #fff;border-bottom:1px solid #a0a0a0;border-right:1px solid #c8c8c8;"></div>
<div style="position:absolute;left:446.2px;top:586.61px;width:61.80000000000001px;height:11.290000000000001px;background:#b9c7c7;"></div>
<div style="position:absolute;left:430.62px;top:588.10px;font-size:9.7px;line-height:9.7px;white-space:pre;color:#000;font-weight:normal;transform-origin:0 0;transform:scaleX(0.9);transform-origin:100% 0;">20</div>
<div style="position:absolute;left:487.14px;top:588.10px;font-size:9.7px;line-height:9.7px;white-space:pre;color:#000;font-weight:normal;transform-origin:0 0;transform:scaleX(0.9);transform-origin:100% 0;">23.0</div>
<div style="position:absolute;left:383.9px;top:599.1px;width:61.10000000000002px;height:11.99px;background:#f0f0f0;border-top:1px solid #fff;border-left:1px solid #fff;border-bottom:1px solid #a0a0a0;border-right:1px solid #c8c8c8;"></div>
<div style="position:absolute;left:446.2px;top:599.1px;width:61.80000000000001px;height:11.290000000000001px;background:#bdc1c1;"></div>
<div style="position:absolute;left:430.62px;top:600.59px;font-size:9.7px;line-height:9.7px;white-space:pre;color:#000;font-weight:normal;transform-origin:0 0;transform:scaleX(0.9);transform-origin:100% 0;">21</div>
<div style="position:absolute;left:487.14px;top:600.59px;font-size:9.7px;line-height:9.7px;white-space:pre;color:#000;font-weight:normal;transform-origin:0 0;transform:scaleX(0.9);transform-origin:100% 0;">25.6</div>
<div style="position:absolute;left:383.9px;top:611.59px;width:61.10000000000002px;height:11.99px;background:#f0f0f0;border-top:1px solid #fff;border-left:1px solid #fff;border-bottom:1px solid #a0a0a0;border-right:1px solid #c8c8c8;"></div>
<div style="position:absolute;left:446.2px;top:611.59px;width:61.80000000000001px;height:11.290000000000001px;background:#c4b5b5;"></div>
<div style="position:absolute;left:430.62px;top:613.08px;font-size:9.7px;line-height:9.7px;white-space:pre;color:#000;font-weight:normal;transform-origin:0 0;transform:scaleX(0.9);transform-origin:100% 0;">22</div>
<div style="position:absolute;left:487.14px;top:613.08px;font-size:9.7px;line-height:9.7px;white-space:pre;color:#000;font-weight:normal;transform-origin:0 0;transform:scaleX(0.9);transform-origin:100% 0;">30.7</div>
<div style="position:absolute;left:383.9px;top:624.08px;width:61.10000000000002px;height:11.99px;background:#f0f0f0;border-top:1px solid #fff;border-left:1px solid #fff;border-bottom:1px solid #a0a0a0;border-right:1px solid #c8c8c8;"></div>
<div style="position:absolute;left:446.2px;top:624.08px;width:61.80000000000001px;height:11.290000000000001px;background:#cba9a9;"></div>
<div style="position:absolute;left:430.62px;top:625.57px;font-size:9.7px;line-height:9.7px;white-space:pre;color:#000;font-weight:normal;transform-origin:0 0;transform:scaleX(0.9);transform-origin:100% 0;">23</div>
<div style="position:absolute;left:487.14px;top:625.57px;font-size:9.7px;line-height:9.7px;white-space:pre;color:#000;font-weight:normal;transform-origin:0 0;transform:scaleX(0.9);transform-origin:100% 0;">35.8</div>
<div style="position:absolute;left:383.9px;top:636.5699999999999px;width:61.10000000000002px;height:11.99px;background:#f0f0f0;border-top:1px solid #fff;border-left:1px solid #fff;border-bottom:1px solid #a0a0a0;border-right:1px solid #c8c8c8;"></div>
<div style="position:absolute;left:446.2px;top:636.5699999999999px;width:61.80000000000001px;height:11.290000000000001px;background:#d29d9d;"></div>
<div style="position:absolute;left:430.62px;top:638.06px;font-size:9.7px;line-height:9.7px;white-space:pre;color:#000;font-weight:normal;transform-origin:0 0;transform:scaleX(0.9);transform-origin:100% 0;">24</div>
<div style="position:absolute;left:487.14px;top:638.06px;font-size:9.7px;line-height:9.7px;white-space:pre;color:#000;font-weight:normal;transform-origin:0 0;transform:scaleX(0.9);transform-origin:100% 0;">41.0</div>
<div style="position:absolute;left:383.9px;top:649.06px;width:61.10000000000002px;height:11.99px;background:#f0f0f0;border-top:1px solid #fff;border-left:1px solid #fff;border-bottom:1px solid #a0a0a0;border-right:1px solid #c8c8c8;"></div>
<div style="position:absolute;left:446.2px;top:649.06px;width:61.80000000000001px;height:11.290000000000001px;background:#d99191;"></div>
<div style="position:absolute;left:430.62px;top:650.55px;font-size:9.7px;line-height:9.7px;white-space:pre;color:#000;font-weight:normal;transform-origin:0 0;transform:scaleX(0.9);transform-origin:100% 0;">25</div>
<div style="position:absolute;left:487.14px;top:650.55px;font-size:9.7px;line-height:9.7px;white-space:pre;color:#000;font-weight:normal;transform-origin:0 0;transform:scaleX(0.9);transform-origin:100% 0;">46.1</div>
<div style="position:absolute;left:383.9px;top:661.55px;width:61.10000000000002px;height:11.99px;background:#f0f0f0;border-top:1px solid #fff;border-left:1px solid #fff;border-bottom:1px solid #a0a0a0;border-right:1px solid #c8c8c8;"></div>
<div style="position:absolute;left:446.2px;top:661.55px;width:61.80000000000001px;height:11.290000000000001px;background:#e08585;"></div>
<div style="position:absolute;left:430.62px;top:663.04px;font-size:9.7px;line-height:9.7px;white-space:pre;color:#000;font-weight:normal;transform-origin:0 0;transform:scaleX(0.9);transform-origin:100% 0;">26</div>
<div style="position:absolute;left:487.14px;top:663.04px;font-size:9.7px;line-height:9.7px;white-space:pre;color:#000;font-weight:normal;transform-origin:0 0;transform:scaleX(0.9);transform-origin:100% 0;">51.2</div>
<div style="position:absolute;left:383.9px;top:674.04px;width:61.10000000000002px;height:11.99px;background:#f0f0f0;border-top:1px solid #fff;border-left:1px solid #fff;border-bottom:1px solid #a0a0a0;border-right:1px solid #c8c8c8;"></div>
<div style="position:absolute;left:446.2px;top:674.04px;width:61.80000000000001px;height:11.290000000000001px;background:#ed6e6e;"></div>
<div style="position:absolute;left:430.62px;top:675.53px;font-size:9.7px;line-height:9.7px;white-space:pre;color:#000;font-weight:normal;transform-origin:0 0;transform:scaleX(0.9);transform-origin:100% 0;">27</div>
<div style="position:absolute;left:487.14px;top:675.53px;font-size:9.7px;line-height:9.7px;white-space:pre;color:#000;font-weight:normal;transform-origin:0 0;transform:scaleX(0.9);transform-origin:100% 0;">61.4</div>
<div style="position:absolute;left:383.9px;top:686.53px;width:61.10000000000002px;height:11.99px;background:#f0f0f0;border-top:1px solid #fff;border-left:1px solid #fff;border-bottom:1px solid #a0a0a0;border-right:1px solid #c8c8c8;"></div>
<div style="position:absolute;left:446.2px;top:686.53px;width:61.80000000000001px;height:11.290000000000001px;background:#fe5252;"></div>
<div style="position:absolute;left:430.62px;top:688.02px;font-size:9.7px;line-height:9.7px;white-space:pre;color:#000;font-weight:normal;transform-origin:0 0;transform:scaleX(0.9);transform-origin:100% 0;">28</div>
<div style="position:absolute;left:487.14px;top:688.02px;font-size:9.7px;line-height:9.7px;white-space:pre;color:#000;font-weight:normal;transform-origin:0 0;transform:scaleX(0.9);transform-origin:100% 0;">73.4</div>
<div style="position:absolute;left:383.9px;top:699.02px;width:61.10000000000002px;height:11.99px;background:#f0f0f0;border-top:1px solid #fff;border-left:1px solid #fff;border-bottom:1px solid #a0a0a0;border-right:1px solid #c8c8c8;"></div>
<div style="position:absolute;left:446.2px;top:699.02px;width:61.80000000000001px;height:11.290000000000001px;background:#ff5050;"></div>
<div style="position:absolute;left:430.62px;top:700.51px;font-size:9.7px;line-height:9.7px;white-space:pre;color:#000;font-weight:normal;transform-origin:0 0;transform:scaleX(0.9);transform-origin:100% 0;">29</div>
<div style="position:absolute;left:487.14px;top:700.51px;font-size:9.7px;line-height:9.7px;white-space:pre;color:#000;font-weight:normal;transform-origin:0 0;transform:scaleX(0.9);transform-origin:100% 0;">74.3</div>
<div style="position:absolute;left:546.3px;top:336.1px;width:124.0px;height:376.60999999999996px;background:#e2e2e2;"></div>
<div style="position:absolute;left:546.3px;top:336.1px;width:60.90000000000009px;height:11.799999999999988px;background:#f0f0f0;border-top:1px solid #fff;border-left:1px solid #fff;border-bottom:1px solid #a0a0a0;border-right:1px solid #c0c0c0;"></div>
<div style="position:absolute;left:608.2px;top:336.1px;width:62.09999999999991px;height:11.799999999999988px;background:#dcdcdc;border-top:1px solid #fff;border-left:1px solid #fff;border-bottom:1px solid #a0a0a0;border-right:1px solid #c0c0c0;"></div>
<div style="position:absolute;left:607.2px;top:336.1px;width:1.0px;height:375.40999999999997px;background:#e6e6e6;"></div>
<div style="position:absolute;left:546.3px;top:349.3px;width:60.90000000000009px;height:362.21px;background:#d8d8d8;"></div>
<div style="position:absolute;left:608.2px;top:349.3px;width:62.09999999999991px;height:362.21px;background:#dcdcdc;"></div>
<div style="position:absolute;left:546.3px;top:711.31px;width:61.90000000000009px;height:1.4px;background:#fafafa;"></div>
<div style="position:absolute;left:546.3px;top:349.3px;width:60.90000000000009px;height:11.99px;background:#dedede;border-top:1px solid #fff;border-left:1px solid #fff;border-bottom:1px solid #a0a0a0;border-right:1px solid #c8c8c8;"></div>
<div style="position:absolute;left:608.2px;top:349.3px;width:62.09999999999991px;height:12.290000000000001px;background:#a5dada;border:1px solid #222;"></div>
<div style="position:absolute;left:598.21px;top:350.79px;font-size:9.7px;line-height:9.7px;white-space:pre;color:#000;font-weight:normal;transform-origin:0 0;transform:scaleX(0.9);transform-origin:100% 0;">1</div>
<div style="position:absolute;left:654.83px;top:350.79px;font-size:9.7px;line-height:9.7px;white-space:pre;color:#000;font-weight:normal;transform-origin:0 0;transform:scaleX(0.9);transform-origin:100% 0;">0.0</div>
<div style="position:absolute;left:546.3px;top:361.79px;width:60.90000000000009px;height:11.99px;background:#f0f0f0;border-top:1px solid #fff;border-left:1px solid #fff;border-bottom:1px solid #a0a0a0;border-right:1px solid #c8c8c8;"></div>
<div style="position:absolute;left:608.2px;top:361.79px;width:62.09999999999991px;height:11.290000000000001px;background:#a6e7e7;"></div>
<div style="position:absolute;left:598.21px;top:363.28px;font-size:9.7px;line-height:9.7px;white-space:pre;color:#000;font-weight:normal;transform-origin:0 0;transform:scaleX(0.9);transform-origin:100% 0;">2</div>
<div style="position:absolute;left:649.44px;top:363.28px;font-size:9.7px;line-height:9.7px;white-space:pre;color:#000;font-weight:normal;transform-origin:0 0;transform:scaleX(0.9);transform-origin:100% 0;">12.0</div>
<div style="position:absolute;left:546.3px;top:374.28000000000003px;width:60.90000000000009px;height:11.99px;background:#f0f0f0;border-top:1px solid #fff;border-left:1px solid #fff;border-bottom:1px solid #a0a0a0;border-right:1px solid #c8c8c8;"></div>
<div style="position:absolute;left:608.2px;top:374.28000000000003px;width:62.09999999999991px;height:11.290000000000001px;background:#acdede;"></div>
<div style="position:absolute;left:598.21px;top:375.77px;font-size:9.7px;line-height:9.7px;white-space:pre;color:#000;font-weight:normal;transform-origin:0 0;transform:scaleX(0.9);transform-origin:100% 0;">3</div>
<div style="position:absolute;left:649.44px;top:375.77px;font-size:9.7px;line-height:9.7px;white-space:pre;color:#000;font-weight:normal;transform-origin:0 0;transform:scaleX(0.9);transform-origin:100% 0;">17.6</div>
<div style="position:absolute;left:546.3px;top:386.77px;width:60.90000000000009px;height:11.99px;background:#f0f0f0;border-top:1px solid #fff;border-left:1px solid #fff;border-bottom:1px solid #a0a0a0;border-right:1px solid #c8c8c8;"></div>
<div style="position:absolute;left:608.2px;top:386.77px;width:62.09999999999991px;height:11.290000000000001px;background:#b2d4d4;"></div>
<div style="position:absolute;left:598.21px;top:388.26px;font-size:9.7px;line-height:9.7px;white-space:pre;color:#000;font-weight:normal;transform-origin:0 0;transform:scaleX(0.9);transform-origin:100% 0;">4</div>
<div style="position:absolute;left:649.44px;top:388.26px;font-size:9.7px;line-height:9.7px;white-space:pre;color:#000;font-weight:normal;transform-origin:0 0;transform:scaleX(0.9);transform-origin:100% 0;">23.2</div>
<div style="position:absolute;left:546.3px;top:399.26px;width:60.90000000000009px;height:11.99px;background:#f0f0f0;border-top:1px solid #fff;border-left:1px solid #fff;border-bottom:1px solid #a0a0a0;border-right:1px solid #c8c8c8;"></div>
<div style="position:absolute;left:608.2px;top:399.26px;width:62.09999999999991px;height:11.290000000000001px;background:#b7caca;"></div>
<div style="position:absolute;left:598.21px;top:400.75px;font-size:9.7px;line-height:9.7px;white-space:pre;color:#000;font-weight:normal;transform-origin:0 0;transform:scaleX(0.9);transform-origin:100% 0;">5</div>
<div style="position:absolute;left:649.44px;top:400.75px;font-size:9.7px;line-height:9.7px;white-space:pre;color:#000;font-weight:normal;transform-origin:0 0;transform:scaleX(0.9);transform-origin:100% 0;">28.8</div>
<div style="position:absolute;left:546.3px;top:411.75px;width:60.90000000000009px;height:11.99px;background:#f0f0f0;border-top:1px solid #fff;border-left:1px solid #fff;border-bottom:1px solid #a0a0a0;border-right:1px solid #c8c8c8;"></div>
<div style="position:absolute;left:608.2px;top:411.75px;width:62.09999999999991px;height:11.290000000000001px;background:#bdc1c1;"></div>
<div style="position:absolute;left:598.21px;top:413.24px;font-size:9.7px;line-height:9.7px;white-space:pre;color:#000;font-weight:normal;transform-origin:0 0;transform:scaleX(0.9);transform-origin:100% 0;">6</div>
<div style="position:absolute;left:649.44px;top:413.24px;font-size:9.7px;line-height:9.7px;white-space:pre;color:#000;font-weight:normal;transform-origin:0 0;transform:scaleX(0.9);transform-origin:100% 0;">34.4</div>
<div style="position:absolute;left:546.3px;top:424.24px;width:60.90000000000009px;height:11.99px;background:#f0f0f0;border-top:1px solid #fff;border-left:1px solid #fff;border-bottom:1px solid #a0a0a0;border-right:1px solid #c8c8c8;"></div>
<div style="position:absolute;left:608.2px;top:424.24px;width:62.09999999999991px;height:11.290000000000001px;background:#c1b9b9;"></div>
<div style="position:absolute;left:598.21px;top:425.73px;font-size:9.7px;line-height:9.7px;white-space:pre;color:#000;font-weight:normal;transform-origin:0 0;transform:scaleX(0.9);transform-origin:100% 0;">7</div>
<div style="position:absolute;left:649.44px;top:425.73px;font-size:9.7px;line-height:9.7px;white-space:pre;color:#000;font-weight:normal;transform-origin:0 0;transform:scaleX(0.9);transform-origin:100% 0;">38.8</div>
<div style="position:absolute;left:546.3px;top:436.73px;width:60.90000000000009px;height:11.99px;background:#f0f0f0;border-top:1px solid #fff;border-left:1px solid #fff;border-bottom:1px solid #a0a0a0;border-right:1px solid #c8c8c8;"></div>
<div style="position:absolute;left:608.2px;top:436.73px;width:62.09999999999991px;height:11.290000000000001px;background:#c5b2b2;"></div>
<div style="position:absolute;left:598.21px;top:438.22px;font-size:9.7px;line-height:9.7px;white-space:pre;color:#000;font-weight:normal;transform-origin:0 0;transform:scaleX(0.9);transform-origin:100% 0;">8</div>
<div style="position:absolute;left:649.44px;top:438.22px;font-size:9.7px;line-height:9.7px;white-space:pre;color:#000;font-weight:normal;transform-origin:0 0;transform:scaleX(0.9);transform-origin:100% 0;">42.8</div>
<div style="position:absolute;left:546.3px;top:449.22px;width:60.90000000000009px;height:11.99px;background:#f0f0f0;border-top:1px solid #fff;border-left:1px solid #fff;border-bottom:1px solid #a0a0a0;border-right:1px solid #c8c8c8;"></div>
<div style="position:absolute;left:608.2px;top:449.22px;width:62.09999999999991px;height:11.290000000000001px;background:#c8adad;"></div>
<div style="position:absolute;left:598.21px;top:450.71px;font-size:9.7px;line-height:9.7px;white-space:pre;color:#000;font-weight:normal;transform-origin:0 0;transform:scaleX(0.9);transform-origin:100% 0;">9</div>
<div style="position:absolute;left:649.44px;top:450.71px;font-size:9.7px;line-height:9.7px;white-space:pre;color:#000;font-weight:normal;transform-origin:0 0;transform:scaleX(0.9);transform-origin:100% 0;">45.6</div>
<div style="position:absolute;left:546.3px;top:461.71000000000004px;width:60.90000000000009px;height:11.99px;background:#f0f0f0;border-top:1px solid #fff;border-left:1px solid #fff;border-bottom:1px solid #a0a0a0;border-right:1px solid #c8c8c8;"></div>
<div style="position:absolute;left:608.2px;top:461.71000000000004px;width:62.09999999999991px;height:11.290000000000001px;background:#cca7a7;"></div>
<div style="position:absolute;left:592.82px;top:463.20px;font-size:9.7px;line-height:9.7px;white-space:pre;color:#000;font-weight:normal;transform-origin:0 0;transform:scaleX(0.9);transform-origin:100% 0;">10</div>
<div style="position:absolute;left:649.44px;top:463.20px;font-size:9.7px;line-height:9.7px;white-space:pre;color:#000;font-weight:normal;transform-origin:0 0;transform:scaleX(0.9);transform-origin:100% 0;">49.2</div>
<div style="position:absolute;left:546.3px;top:474.20000000000005px;width:60.90000000000009px;height:11.99px;background:#f0f0f0;border-top:1px solid #fff;border-left:1px solid #fff;border-bottom:1px solid #a0a0a0;border-right:1px solid #c8c8c8;"></div>
<div style="position:absolute;left:608.2px;top:474.20000000000005px;width:62.09999999999991px;height:11.290000000000001px;background:#cfa2a2;"></div>
<div style="position:absolute;left:593.54px;top:475.69px;font-size:9.7px;line-height:9.7px;white-space:pre;color:#000;font-weight:normal;transform-origin:0 0;transform:scaleX(0.9);transform-origin:100% 0;">11</div>
<div style="position:absolute;left:649.44px;top:475.69px;font-size:9.7px;line-height:9.7px;white-space:pre;color:#000;font-weight:normal;transform-origin:0 0;transform:scaleX(0.9);transform-origin:100% 0;">52.4</div>
<div style="position:absolute;left:546.3px;top:486.69000000000005px;width:60.90000000000009px;height:11.99px;background:#f0f0f0;border-top:1px solid #fff;border-left:1px solid #fff;border-bottom:1px solid #a0a0a0;border-right:1px solid #c8c8c8;"></div>
<div style="position:absolute;left:608.2px;top:486.69000000000005px;width:62.09999999999991px;height:11.290000000000001px;background:#d29c9c;"></div>
<div style="position:absolute;left:592.82px;top:488.18px;font-size:9.7px;line-height:9.7px;white-space:pre;color:#000;font-weight:normal;transform-origin:0 0;transform:scaleX(0.9);transform-origin:100% 0;">12</div>
<div style="position:absolute;left:649.44px;top:488.18px;font-size:9.7px;line-height:9.7px;white-space:pre;color:#000;font-weight:normal;transform-origin:0 0;transform:scaleX(0.9);transform-origin:100% 0;">55.6</div>
<div style="position:absolute;left:546.3px;top:499.18px;width:60.90000000000009px;height:11.99px;background:#f0f0f0;border-top:1px solid #fff;border-left:1px solid #fff;border-bottom:1px solid #a0a0a0;border-right:1px solid #c8c8c8;"></div>
<div style="position:absolute;left:608.2px;top:499.18px;width:62.09999999999991px;height:11.290000000000001px;background:#d49999;"></div>
<div style="position:absolute;left:592.82px;top:500.67px;font-size:9.7px;line-height:9.7px;white-space:pre;color:#000;font-weight:normal;transform-origin:0 0;transform:scaleX(0.9);transform-origin:100% 0;">13</div>
<div style="position:absolute;left:649.44px;top:500.67px;font-size:9.7px;line-height:9.7px;white-space:pre;color:#000;font-weight:normal;transform-origin:0 0;transform:scaleX(0.9);transform-origin:100% 0;">57.2</div>
<div style="position:absolute;left:546.3px;top:511.67px;width:60.90000000000009px;height:11.99px;background:#f0f0f0;border-top:1px solid #fff;border-left:1px solid #fff;border-bottom:1px solid #a0a0a0;border-right:1px solid #c8c8c8;"></div>
<div style="position:absolute;left:608.2px;top:511.67px;width:62.09999999999991px;height:11.290000000000001px;background:#d69696;"></div>
<div style="position:absolute;left:592.82px;top:513.16px;font-size:9.7px;line-height:9.7px;white-space:pre;color:#000;font-weight:normal;transform-origin:0 0;transform:scaleX(0.9);transform-origin:100% 0;">14</div>
<div style="position:absolute;left:649.44px;top:513.16px;font-size:9.7px;line-height:9.7px;white-space:pre;color:#000;font-weight:normal;transform-origin:0 0;transform:scaleX(0.9);transform-origin:100% 0;">59.2</div>
<div style="position:absolute;left:546.3px;top:524.1600000000001px;width:60.90000000000009px;height:11.99px;background:#f0f0f0;border-top:1px solid #fff;border-left:1px solid #fff;border-bottom:1px solid #a0a0a0;border-right:1px solid #c8c8c8;"></div>
<div style="position:absolute;left:608.2px;top:524.1600000000001px;width:62.09999999999991px;height:11.290000000000001px;background:#d89393;"></div>
<div style="position:absolute;left:592.82px;top:525.65px;font-size:9.7px;line-height:9.7px;white-space:pre;color:#000;font-weight:normal;transform-origin:0 0;transform:scaleX(0.9);transform-origin:100% 0;">15</div>
<div style="position:absolute;left:649.44px;top:525.65px;font-size:9.7px;line-height:9.7px;white-space:pre;color:#000;font-weight:normal;transform-origin:0 0;transform:scaleX(0.9);transform-origin:100% 0;">60.8</div>
<div style="position:absolute;left:546.3px;top:536.65px;width:60.90000000000009px;height:11.99px;background:#f0f0f0;border-top:1px solid #fff;border-left:1px solid #fff;border-bottom:1px solid #a0a0a0;border-right:1px solid #c8c8c8;"></div>
<div style="position:absolute;left:608.2px;top:536.65px;width:62.09999999999991px;height:11.290000000000001px;background:#d99090;"></div>
<div style="position:absolute;left:592.82px;top:538.14px;font-size:9.7px;line-height:9.7px;white-space:pre;color:#000;font-weight:normal;transform-origin:0 0;transform:scaleX(0.9);transform-origin:100% 0;">16</div>
<div style="position:absolute;left:649.44px;top:538.14px;font-size:9.7px;line-height:9.7px;white-space:pre;color:#000;font-weight:normal;transform-origin:0 0;transform:scaleX(0.9);transform-origin:100% 0;">62.4</div>
<div style="position:absolute;left:546.3px;top:549.14px;width:60.90000000000009px;height:11.99px;background:#f0f0f0;border-top:1px solid #fff;border-left:1px solid #fff;border-bottom:1px solid #a0a0a0;border-right:1px solid #c8c8c8;"></div>
<div style="position:absolute;left:608.2px;top:549.14px;width:62.09999999999991px;height:11.290000000000001px;background:#db8d8d;"></div>
<div style="position:absolute;left:592.82px;top:550.63px;font-size:9.7px;line-height:9.7px;white-space:pre;color:#000;font-weight:normal;transform-origin:0 0;transform:scaleX(0.9);transform-origin:100% 0;">17</div>
<div style="position:absolute;left:649.44px;top:550.63px;font-size:9.7px;line-height:9.7px;white-space:pre;color:#000;font-weight:normal;transform-origin:0 0;transform:scaleX(0.9);transform-origin:100% 0;">64.0</div>
<div style="position:absolute;left:546.3px;top:561.63px;width:60.90000000000009px;height:11.99px;background:#f0f0f0;border-top:1px solid #fff;border-left:1px solid #fff;border-bottom:1px solid #a0a0a0;border-right:1px solid #c8c8c8;"></div>
<div style="position:absolute;left:608.2px;top:561.63px;width:62.09999999999991px;height:11.290000000000001px;background:#dd8b8b;"></div>
<div style="position:absolute;left:592.82px;top:563.12px;font-size:9.7px;line-height:9.7px;white-space:pre;color:#000;font-weight:normal;transform-origin:0 0;transform:scaleX(0.9);transform-origin:100% 0;">18</div>
<div style="position:absolute;left:649.44px;top:563.12px;font-size:9.7px;line-height:9.7px;white-space:pre;color:#000;font-weight:normal;transform-origin:0 0;transform:scaleX(0.9);transform-origin:100% 0;">65.6</div>
<div style="position:absolute;left:546.3px;top:574.12px;width:60.90000000000009px;height:11.99px;background:#f0f0f0;border-top:1px solid #fff;border-left:1px solid #fff;border-bottom:1px solid #a0a0a0;border-right:1px solid #c8c8c8;"></div>
<div style="position:absolute;left:608.2px;top:574.12px;width:62.09999999999991px;height:11.290000000000001px;background:#df8787;"></div>
<div style="position:absolute;left:592.82px;top:575.61px;font-size:9.7px;line-height:9.7px;white-space:pre;color:#000;font-weight:normal;transform-origin:0 0;transform:scaleX(0.9);transform-origin:100% 0;">19</div>
<div style="position:absolute;left:649.44px;top:575.61px;font-size:9.7px;line-height:9.7px;white-space:pre;color:#000;font-weight:normal;transform-origin:0 0;transform:scaleX(0.9);transform-origin:100% 0;">67.6</div>
<div style="position:absolute;left:546.3px;top:586.61px;width:60.90000000000009px;height:11.99px;background:#f0f0f0;border-top:1px solid #fff;border-left:1px solid #fff;border-bottom:1px solid #a0a0a0;border-right:1px solid #c8c8c8;"></div>
<div style="position:absolute;left:608.2px;top:586.61px;width:62.09999999999991px;height:11.290000000000001px;background:#e08484;"></div>
<div style="position:absolute;left:592.82px;top:588.10px;font-size:9.7px;line-height:9.7px;white-space:pre;color:#000;font-weight:normal;transform-origin:0 0;transform:scaleX(0.9);transform-origin:100% 0;">20</div>
<div style="position:absolute;left:649.44px;top:588.10px;font-size:9.7px;line-height:9.7px;white-space:pre;color:#000;font-weight:normal;transform-origin:0 0;transform:scaleX(0.9);transform-origin:100% 0;">69.2</div>
<div style="position:absolute;left:546.3px;top:599.1px;width:60.90000000000009px;height:11.99px;background:#f0f0f0;border-top:1px solid #fff;border-left:1px solid #fff;border-bottom:1px solid #a0a0a0;border-right:1px solid #c8c8c8;"></div>
<div style="position:absolute;left:608.2px;top:599.1px;width:62.09999999999991px;height:11.290000000000001px;background:#e28282;"></div>
<div style="position:absolute;left:592.82px;top:600.59px;font-size:9.7px;line-height:9.7px;white-space:pre;color:#000;font-weight:normal;transform-origin:0 0;transform:scaleX(0.9);transform-origin:100% 0;">21</div>
<div style="position:absolute;left:649.44px;top:600.59px;font-size:9.7px;line-height:9.7px;white-space:pre;color:#000;font-weight:normal;transform-origin:0 0;transform:scaleX(0.9);transform-origin:100% 0;">70.8</div>
<div style="position:absolute;left:546.3px;top:611.59px;width:60.90000000000009px;height:11.99px;background:#f0f0f0;border-top:1px solid #fff;border-left:1px solid #fff;border-bottom:1px solid #a0a0a0;border-right:1px solid #c8c8c8;"></div>
<div style="position:absolute;left:608.2px;top:611.59px;width:62.09999999999991px;height:11.290000000000001px;background:#e37f7f;"></div>
<div style="position:absolute;left:592.82px;top:613.08px;font-size:9.7px;line-height:9.7px;white-space:pre;color:#000;font-weight:normal;transform-origin:0 0;transform:scaleX(0.9);transform-origin:100% 0;">22</div>
<div style="position:absolute;left:649.44px;top:613.08px;font-size:9.7px;line-height:9.7px;white-space:pre;color:#000;font-weight:normal;transform-origin:0 0;transform:scaleX(0.9);transform-origin:100% 0;">72.4</div>
<div style="position:absolute;left:546.3px;top:624.08px;width:60.90000000000009px;height:11.99px;background:#f0f0f0;border-top:1px solid #fff;border-left:1px solid #fff;border-bottom:1px solid #a0a0a0;border-right:1px solid #c8c8c8;"></div>
<div style="position:absolute;left:608.2px;top:624.08px;width:62.09999999999991px;height:11.290000000000001px;background:#e57c7c;"></div>
<div style="position:absolute;left:592.82px;top:625.57px;font-size:9.7px;line-height:9.7px;white-space:pre;color:#000;font-weight:normal;transform-origin:0 0;transform:scaleX(0.9);transform-origin:100% 0;">23</div>
<div style="position:absolute;left:649.44px;top:625.57px;font-size:9.7px;line-height:9.7px;white-space:pre;color:#000;font-weight:normal;transform-origin:0 0;transform:scaleX(0.9);transform-origin:100% 0;">74.4</div>
<div style="position:absolute;left:546.3px;top:636.5699999999999px;width:60.90000000000009px;height:11.99px;background:#f0f0f0;border-top:1px solid #fff;border-left:1px solid #fff;border-bottom:1px solid #a0a0a0;border-right:1px solid #c8c8c8;"></div>
<div style="position:absolute;left:608.2px;top:636.5699999999999px;width:62.09999999999991px;height:11.290000000000001px;background:#e87777;"></div>
<div style="position:absolute;left:592.82px;top:638.06px;font-size:9.7px;line-height:9.7px;white-space:pre;color:#000;font-weight:normal;transform-origin:0 0;transform:scaleX(0.9);transform-origin:100% 0;">24</div>
<div style="position:absolute;left:649.44px;top:638.06px;font-size:9.7px;line-height:9.7px;white-space:pre;color:#000;font-weight:normal;transform-origin:0 0;transform:scaleX(0.9);transform-origin:100% 0;">76.8</div>
<div style="position:absolute;left:546.3px;top:649.06px;width:60.90000000000009px;height:11.99px;background:#f0f0f0;border-top:1px solid #fff;border-left:1px solid #fff;border-bottom:1px solid #a0a0a0;border-right:1px solid #c8c8c8;"></div>
<div style="position:absolute;left:608.2px;top:649.06px;width:62.09999999999991px;height:11.290000000000001px;background:#eb7373;"></div>
<div style="position:absolute;left:592.82px;top:650.55px;font-size:9.7px;line-height:9.7px;white-space:pre;color:#000;font-weight:normal;transform-origin:0 0;transform:scaleX(0.9);transform-origin:100% 0;">25</div>
<div style="position:absolute;left:649.44px;top:650.55px;font-size:9.7px;line-height:9.7px;white-space:pre;color:#000;font-weight:normal;transform-origin:0 0;transform:scaleX(0.9);transform-origin:100% 0;">79.6</div>
<div style="position:absolute;left:546.3px;top:661.55px;width:60.90000000000009px;height:11.99px;background:#f0f0f0;border-top:1px solid #fff;border-left:1px solid #fff;border-bottom:1px solid #a0a0a0;border-right:1px solid #c8c8c8;"></div>
<div style="position:absolute;left:608.2px;top:661.55px;width:62.09999999999991px;height:11.290000000000001px;background:#ee6e6e;"></div>
<div style="position:absolute;left:592.82px;top:663.04px;font-size:9.7px;line-height:9.7px;white-space:pre;color:#000;font-weight:normal;transform-origin:0 0;transform:scaleX(0.9);transform-origin:100% 0;">26</div>
<div style="position:absolute;left:649.44px;top:663.04px;font-size:9.7px;line-height:9.7px;white-space:pre;color:#000;font-weight:normal;transform-origin:0 0;transform:scaleX(0.9);transform-origin:100% 0;">82.4</div>
<div style="position:absolute;left:546.3px;top:674.04px;width:60.90000000000009px;height:11.99px;background:#f0f0f0;border-top:1px solid #fff;border-left:1px solid #fff;border-bottom:1px solid #a0a0a0;border-right:1px solid #c8c8c8;"></div>
<div style="position:absolute;left:608.2px;top:674.04px;width:62.09999999999991px;height:11.290000000000001px;background:#f36464;"></div>
<div style="position:absolute;left:592.82px;top:675.53px;font-size:9.7px;line-height:9.7px;white-space:pre;color:#000;font-weight:normal;transform-origin:0 0;transform:scaleX(0.9);transform-origin:100% 0;">27</div>
<div style="position:absolute;left:649.44px;top:675.53px;font-size:9.7px;line-height:9.7px;white-space:pre;color:#000;font-weight:normal;transform-origin:0 0;transform:scaleX(0.9);transform-origin:100% 0;">88.0</div>
<div style="position:absolute;left:546.3px;top:686.53px;width:60.90000000000009px;height:11.99px;background:#f0f0f0;border-top:1px solid #fff;border-left:1px solid #fff;border-bottom:1px solid #a0a0a0;border-right:1px solid #c8c8c8;"></div>
<div style="position:absolute;left:608.2px;top:686.53px;width:62.09999999999991px;height:11.290000000000001px;background:#f95a5a;"></div>
<div style="position:absolute;left:592.82px;top:688.02px;font-size:9.7px;line-height:9.7px;white-space:pre;color:#000;font-weight:normal;transform-origin:0 0;transform:scaleX(0.9);transform-origin:100% 0;">28</div>
<div style="position:absolute;left:649.44px;top:688.02px;font-size:9.7px;line-height:9.7px;white-space:pre;color:#000;font-weight:normal;transform-origin:0 0;transform:scaleX(0.9);transform-origin:100% 0;">94.0</div>
<div style="position:absolute;left:546.3px;top:699.02px;width:60.90000000000009px;height:11.99px;background:#f0f0f0;border-top:1px solid #fff;border-left:1px solid #fff;border-bottom:1px solid #a0a0a0;border-right:1px solid #c8c8c8;"></div>
<div style="position:absolute;left:608.2px;top:699.02px;width:62.09999999999991px;height:11.290000000000001px;background:#ff5050;"></div>
<div style="position:absolute;left:592.82px;top:700.51px;font-size:9.7px;line-height:9.7px;white-space:pre;color:#000;font-weight:normal;transform-origin:0 0;transform:scaleX(0.9);transform-origin:100% 0;">29</div>
<div style="position:absolute;left:649.44px;top:700.51px;font-size:9.7px;line-height:9.7px;white-space:pre;color:#000;font-weight:normal;transform-origin:0 0;transform:scaleX(0.9);transform-origin:100% 0;">99.6</div>
<svg style="left:10.5px;top:779.5px;" width="6" height="8" viewBox="0 0 6 8"><path d="M4.6 0.8 L1.4 3.9 L4.6 7" stroke="#606060" stroke-width="1.6" fill="none"/></svg>
<svg style="left:191.5px;top:779.5px;" width="6" height="8" viewBox="0 0 6 8"><path d="M1.4 0.8 L4.6 3.9 L1.4 7" stroke="#606060" stroke-width="1.6" fill="none"/></svg>
<svg style="left:190.5px;top:297.8px;" width="9" height="5" viewBox="0 0 9 5"><path d="M0.6 0.6 L4.3 4 L8 0.6" stroke="#404040" stroke-width="1" fill="none"/></svg>
<svg style="left:189.5px;top:278.5px;" width="6" height="6" viewBox="0 0 6 6"><path d="M0.8 0.8 L5 5 M5 0.8 L0.8 5" stroke="#eef0f4" stroke-width="1.3"/></svg>
<svg style="left:2.2px;top:213.2px;" width="14" height="10.2" viewBox="0 0 14 10.2"><rect x="0" y="1.8" width="13.5" height="6.6" rx="1" fill="#000"/><rect x="1.50" y="0.1" width="1.3" height="2.2" fill="#000"/><rect x="1.50" y="7.9" width="1.3" height="2.2" fill="#000"/><rect x="4.00" y="0.1" width="1.3" height="2.2" fill="#000"/><rect x="4.00" y="7.9" width="1.3" height="2.2" fill="#000"/><rect x="6.50" y="0.1" width="1.3" height="2.2" fill="#000"/><rect x="6.50" y="7.9" width="1.3" height="2.2" fill="#000"/><rect x="9.00" y="0.1" width="1.3" height="2.2" fill="#000"/><rect x="9.00" y="7.9" width="1.3" height="2.2" fill="#000"/><rect x="11.50" y="0.1" width="1.3" height="2.2" fill="#000"/><rect x="11.50" y="7.9" width="1.3" height="2.2" fill="#000"/></svg>
<div style="position:absolute;left:19.50px;top:213.86px;font-size:10.8px;line-height:10.8px;white-space:pre;color:#9a9a9a;font-weight:normal;transform-origin:0 0;transform:scaleX(0.8573);">TunerPro RT - CRF 38770-K84-901 10800.bin | XDF File - CRF150L-38770-K84-901.xdf</div>
<div style="position:absolute;left:6.25px;top:231.06px;font-size:10.8px;line-height:10.8px;white-space:pre;color:#1a1a1a;font-weight:normal;transform-origin:0 0;transform:scaleX(0.8474);">File</div>
<div style="position:absolute;left:32.20px;top:231.06px;font-size:10.8px;line-height:10.8px;white-space:pre;color:#1a1a1a;font-weight:normal;transform-origin:0 0;transform:scaleX(0.8145);">XDF</div>
<div style="position:absolute;left:62.00px;top:231.06px;font-size:10.8px;line-height:10.8px;white-space:pre;color:#1a1a1a;font-weight:normal;transform-origin:0 0;transform:scaleX(0.8786);">View</div>
<div style="position:absolute;left:94.70px;top:231.06px;font-size:10.8px;line-height:10.8px;white-space:pre;color:#1a1a1a;font-weight:normal;transform-origin:0 0;transform:scaleX(0.9030);">Compare</div>
<div style="position:absolute;left:146.90px;top:231.06px;font-size:10.8px;line-height:10.8px;white-space:pre;color:#1a1a1a;font-weight:normal;transform-origin:0 0;transform:scaleX(0.9460);">Acquisition</div>
<div style="position:absolute;left:208.60px;top:231.06px;font-size:10.8px;line-height:10.8px;white-space:pre;color:#1a1a1a;font-weight:normal;transform-origin:0 0;transform:scaleX(0.8724);">Tools</div>
<div style="position:absolute;left:242.70px;top:231.06px;font-size:10.8px;line-height:10.8px;white-space:pre;color:#1a1a1a;font-weight:normal;transform-origin:0 0;transform:scaleX(0.9426);">Window</div>
<div style="position:absolute;left:291.20px;top:231.06px;font-size:10.8px;line-height:10.8px;white-space:pre;color:#1a1a1a;font-weight:normal;transform-origin:0 0;transform:scaleX(0.8956);">Help</div>
<div style="position:absolute;left:5.40px;top:800.60px;font-size:9.8px;line-height:9.8px;white-space:pre;color:#ffffff;font-weight:normal;transform-origin:0 0;transform:scaleX(1.0301);">Not Emulating</div>
<div style="position:absolute;left:111.10px;top:802.60px;font-size:9.8px;line-height:9.8px;white-space:pre;color:#1a1a1a;font-weight:normal;transform-origin:0 0;transform:scaleX(1.0128);">Hardware Not Found</div>
<div style="position:absolute;left:343.50px;top:801.97px;font-size:10.2px;line-height:10.2px;white-space:pre;color:#1a1a1a;font-weight:normal;transform-origin:0 0;transform:scaleX(0.8703);">DA: Not Connected</div>
<svg style="left:0px;top:243px" width="1024" height="23" viewBox="0 0 1024 23"><rect x="2" y="3.6999999999999886" width="1" height="16.5" fill="#ffffff"/><rect x="3" y="3.6999999999999886" width="1" height="16.5" fill="#a8a8a8"/><rect x="66.3" y="3.6999999999999886" width="1" height="16.5" fill="#ffffff"/><rect x="67.3" y="3.6999999999999886" width="1" height="16.5" fill="#a8a8a8"/><rect x="134.5" y="3.6999999999999886" width="1" height="16.5" fill="#ffffff"/><rect x="135.5" y="3.6999999999999886" width="1" height="16.5" fill="#a8a8a8"/><rect x="162.2" y="3.6999999999999886" width="1" height="16.5" fill="#ffffff"/><rect x="163.2" y="3.6999999999999886" width="1" height="16.5" fill="#a8a8a8"/><rect x="245.8" y="3.6999999999999886" width="1" height="16.5" fill="#ffffff"/><rect x="246.8" y="3.6999999999999886" width="1" height="16.5" fill="#a8a8a8"/><rect x="276.5" y="3.6999999999999886" width="1" height="16.5" fill="#ffffff"/><rect x="277.5" y="3.6999999999999886" width="1" height="16.5" fill="#a8a8a8"/><rect x="341" y="3.6999999999999886" width="1" height="16.5" fill="#ffffff"/><rect x="342" y="3.6999999999999886" width="1" height="16.5" fill="#a8a8a8"/><rect x="426.2" y="3.6999999999999886" width="1" height="16.5" fill="#ffffff"/><rect x="427.2" y="3.6999999999999886" width="1" height="16.5" fill="#a8a8a8"/><g transform="translate(9.9,6.099999999999994)"><path d="M0.6 3.2 H4.5 L5.5 4.3 H9.5 V11.8 H0.6Z" fill="#f3cf72" stroke="#c98e45" stroke-width="1"/><path d="M2.2 6.4 H12.6 L10.2 11.8 H0.6Z" fill="#f7dc83" stroke="#c98e45" stroke-width="1"/><path d="M6 2.8 Q8.5 0.2 11.2 1.6" stroke="#40a840" stroke-width="1.6" fill="none"/><path d="M11.5 0.3 L12.8 3.2 L9.8 3.3Z" fill="#40a840"/></g><g transform="translate(30.1,6.800000000000011)"><rect x="0.5" y="0.5" width="10.8" height="11" rx="1" fill="#7b78d4" stroke="#5a57a8" stroke-width="1"/><rect x="2.6" y="0.9" width="6.6" height="5" fill="#f4f4f4"/><rect x="3.3" y="2" width="5.2" height="0.7" fill="#c8c8c8"/><rect x="3.3" y="3.4" width="5.2" height="0.7" fill="#c8c8c8"/><rect x="3" y="7.6" width="5.4" height="3.4" fill="#d6d6d6"/><rect x="4" y="8.6" width="1.4" height="1.4" fill="#666"/></g><g transform="translate(48.2,3)"><path d="M0.5 5.8 H4.6 L5.4 6.8 H11.4 V15.5 H0.5Z" fill="#f5d678" stroke="#c98e45" stroke-width="1"/><path d="M0.5 8.2 H11.4" stroke="#e4b95a" stroke-width="0.8"/><path d="M13.5 6.8 Q11.5 3 8.8 2.6" stroke="#4a58c0" stroke-width="1.3" fill="none"/><path d="M8 0.8 L7.5 4.6 L10.6 3.5Z" fill="#4a58c0"/></g><g transform="translate(74.9,6.800000000000011)"><path d="M5.8 0.9 L11.8 0.2 V10.2 L5.8 12Z" fill="#2f7fd0"/><path d="M5.8 0.9 V12" stroke="#1a5aa8" stroke-width="0.8"/><path d="M3.6 1.2 V5" stroke="#d8d8d8" stroke-width="1.2"/><circle cx="2.7" cy="8.6" r="2.4" fill="#f0a020"/><circle cx="2.7" cy="7.8" r="0.9" fill="#ffe0a0"/></g><g transform="translate(93.7,6.800000000000011)"><path d="M1.2 4.5 L6.8 0.3 L11.6 4.2 L11.8 7.4 L6.8 11.4 L2 8.4Z" fill="#fbfbfb" stroke="#d0d0d0" stroke-width="0.8"/><circle cx="3.3" cy="9.2" r="2.1" fill="none" stroke="#3aa83a" stroke-width="1.5"/></g><g transform="translate(113.9,6.099999999999994)"><path d="M0.6 0.6 H6.7 L9.6 3.5 V12.2 H0.6Z" fill="#f4f6fc" stroke="#9aa0aa" stroke-width="1"/><path d="M6.5 0.8 V3.7 H9.4" fill="#dde2ea" stroke="#9aa0aa" stroke-width="0.8"/></g><g transform="translate(142.3,6.099999999999994)"><path d="M5.5 0.8 H12.5 L13.2 2.8 L11.6 7.6 H7 L5 2.8Z" fill="#8c8c8c" stroke="#444" stroke-width="0.6"/><rect x="5.6" y="1.2" width="6.8" height="1.5" fill="#f0e000"/><path d="M9.2 7.6 Q9 10.2 6.6 10.3 Q4.5 10.4 3 11.2 Q1.6 12 0.8 12.8" stroke="#111" stroke-width="1.2" fill="none"/><circle cx="9.2" cy="8.4" r="0.9" fill="#111"/></g><path transform="translate(170.9,6.5)" d="M6.15 0 L12.3 6.5 H9.6 V13 H2.7 V6.5 H0Z" fill="#a0a0a0"/><path transform="translate(189.3,6.5)" d="M2.7 0 H9.6 V6.5 H12.3 L6.15 13 L0 6.5 H2.7Z" fill="#a0a0a0"/><circle cx="215.05" cy="12.800000000000011" r="6.9" fill="#a0a0a0"/><rect x="211" y="9.400000000000006" width="2" height="0.8" fill="#c8c8c8"/><rect x="216.6" y="9.400000000000006" width="2" height="0.8" fill="#c8c8c8"/><path transform="translate(227.3,6.099999999999994)" d="M0 0 H6.2 L13.7 6.4 V13.4 H4.7 V11.7 H0Z" fill="#a0a0a0"/><rect x="253.3" y="9.400000000000006" width="13.3" height="6.6" rx="1.2" fill="#a0a0a0"/><rect x="254.60" y="7.800000000000011" width="1.6" height="9.9" fill="#a0a0a0"/><rect x="257.20" y="7.800000000000011" width="1.6" height="9.9" fill="#a0a0a0"/><rect x="259.80" y="7.800000000000011" width="1.6" height="9.9" fill="#a0a0a0"/><rect x="262.40" y="7.800000000000011" width="1.6" height="9.9" fill="#a0a0a0"/><rect x="265.00" y="7.800000000000011" width="1.6" height="9.9" fill="#a0a0a0"/><polygon points="291.00,9.60 289.86,10.54 290.00,12.00 288.54,11.86 287.60,13.00 286.66,11.86 285.20,12.00 285.34,10.54 284.20,9.60 285.34,8.66 285.20,7.20 286.66,7.34 287.60,6.20 288.54,7.34 290.00,7.20 289.86,8.66" fill="#7a98d0" stroke="#7a98d0" stroke-width="0.8" stroke-linejoin="round"/><circle cx="287.6" cy="9.599999999999994" r="1.02" fill="#f0f0f0"/><polygon points="297.00,14.80 295.58,15.88 295.97,17.63 294.18,17.54 293.36,19.13 292.05,17.92 290.40,18.61 290.17,16.84 288.47,16.30 289.43,14.80 288.47,13.30 290.17,12.76 290.40,10.99 292.05,11.68 293.36,10.47 294.18,12.06 295.97,11.97 295.58,13.72" fill="#a8aeb8" stroke="#a8aeb8" stroke-width="0.8" stroke-linejoin="round"/><circle cx="292.6" cy="14.800000000000011" r="1.32" fill="#f0f0f0"/><g transform="translate(304.2,6.300000000000011)"><path d="M10.8 2.3 H4 V0.6 L0.4 3.4 L4 6.2 V4.5 H10.8Z" fill="#0010d0" stroke="#000" stroke-width="0.9" stroke-linejoin="round"/><path d="M0.8 8 H7.6 V6.3 L11.3 9.2 L7.6 12 V10.3 H0.8Z" fill="#0010d0" stroke="#000" stroke-width="0.9" stroke-linejoin="round"/></g><g transform="translate(322,7.800000000000011)"><rect x="0.5" y="0.5" width="9.4" height="10.5" fill="#e8ecf8" stroke="#3040a8" stroke-width="1"/><path d="M1.5 2.6 H9 M1.5 4.8 H9 M1.5 7 H9 M1.5 9.2 H9" stroke="#3040a8" stroke-width="1"/><path d="M13.2 4.4 H7.6 V2.4 L3.4 5.6 L7.6 8.8 V6.8 H13.2Z" fill="#ff0000"/></g><circle cx="354.9" cy="12.599999999999994" r="6.5" fill="none" stroke="#ff1010" stroke-width="1"/><circle cx="354.9" cy="12.599999999999994" r="4.8" fill="#f01010"/><path d="M353.2 14.600000000000023 L356.6 10.199999999999989" stroke="#fff" stroke-width="1.4"/><circle cx="354.4" cy="13.399999999999977" r="1.2" fill="#fff"/><g transform="translate(368.2,7.199999999999989)"><rect x="0" y="1" width="11.6" height="10.6" fill="#efe27a" stroke="#d8c860" stroke-width="0.6"/><path d="M2.6 0 V2.6 M5.1 0 V2.6 M7.6 0 V2.6 M10 0 V2.6" stroke="#888" stroke-width="0.9"/></g><g transform="translate(386.5,5.800000000000011)"><circle cx="6.6" cy="6.6" r="5.9" fill="#eef0f8" stroke="#e8a020" stroke-width="1.2"/><path d="M6.6 6.6 L3.4 3.6 M6.6 6.6 L7.2 9" stroke="#555" stroke-width="0.8"/><circle cx="10" cy="9.6" r="3.6" fill="#2f62c8"/><rect x="9.5" y="8.4" width="1" height="3.2" fill="#fff"/><rect x="9.5" y="7" width="1" height="0.8" fill="#fff"/></g><rect x="406" y="9.300000000000011" width="3.7" height="9.7" fill="#88dd66" stroke="#50a040" stroke-width="0.6"/><rect x="411" y="11.199999999999989" width="2.8" height="7.8" fill="#f07060" stroke="#c04030" stroke-width="0.6"/><rect x="415.5" y="6.199999999999989" width="3.5" height="12.8" fill="#80a8f0" stroke="#4060c0" stroke-width="0.6"/><polygon points="437.8,7.400000000000006 443.3,7.400000000000006 446.1,10.400000000000006 446.1,15.600000000000023 443.3,18.600000000000023 437.8,18.600000000000023 435,15.600000000000023 435,10.400000000000006" fill="#a0a0a0" stroke="#a0a0a0" stroke-width="0.6" stroke-linejoin="round"/><path d="M437.2 10.599999999999994 L439.5 8.599999999999994" stroke="#c8c8c8" stroke-width="0.9"/><polygon points="453.7,8 464.3,13 453.7,18" fill="#a0a0a0"/><rect x="474" y="9" width="3.5" height="8.4" fill="#a0a0a0"/><rect x="479.2" y="9" width="3.2" height="8.4" fill="#a0a0a0"/><rect x="493" y="9" width="9.4" height="8.4" fill="#a0a0a0"/><polygon points="511.5,14.800000000000011 516.6,8 521.7,14.800000000000011" fill="#a0a0a0"/><rect x="511.5" y="15.699999999999989" width="10.2" height="1.9" fill="#a0a0a0"/><rect x="540" y="9.199999999999989" width="318" height="3.3" fill="#e7eaea" stroke="#d6d6d6" stroke-width="0.8"/><rect x="534.6" y="5.099999999999994" width="5.5" height="10.9" fill="#0078d7"/></svg>
</body></html>
